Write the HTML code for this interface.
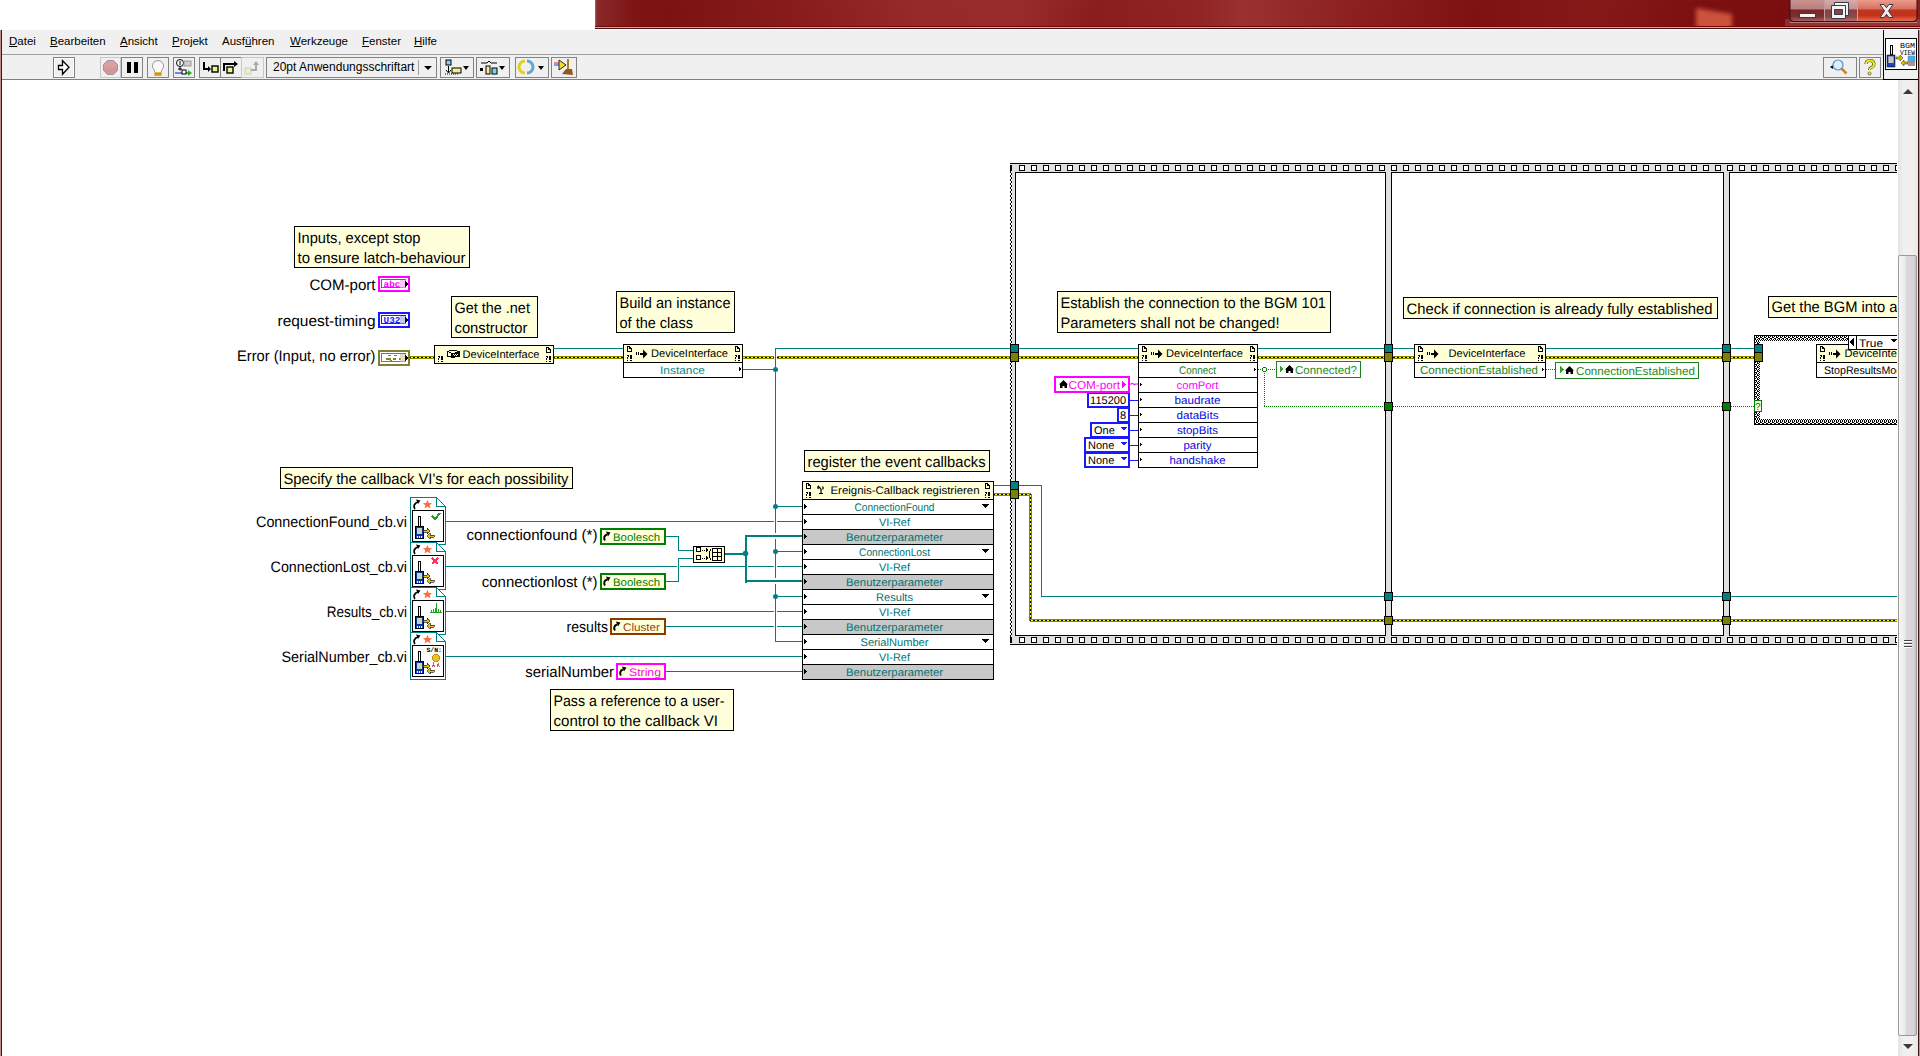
<!DOCTYPE html>
<html><head><meta charset="utf-8">
<style>
*{margin:0;padding:0;box-sizing:border-box}
html,body{width:1920px;height:1056px;overflow:hidden;background:#fff;font-family:"Liberation Sans",sans-serif}
.a{position:absolute}
#title{left:595px;top:0;width:1325px;height:29px;box-shadow:inset 2px 0 2px -1px rgba(255,200,200,.35);background:linear-gradient(90deg,#8a2a2a 0px,#7e1414 40px,#7c1212 70px,#881c1c 200px,#962a2a 320px,#982c2c 420px,#8a1e1e 500px,#902424 600px,#9a3030 650px,#8c2020 760px,#7e1212 880px,#861818 1000px,#7c1010 1100px,#7a0e0e 1190px,#8a2020 1325px)}
#menu{left:2px;top:30px;width:1916px;height:25px;background:#f0f0f0;border-bottom:1px solid #a0a0a0}
#tool{left:2px;top:55px;width:1916px;height:25px;background:#f0f0f0;border-bottom:1px solid #808080}
.mi{position:absolute;top:35px;font-size:11.5px;color:#000;white-space:pre}
.mi u{text-decoration:underline}
.tb{position:absolute;top:57px;height:21px;border:1px solid #828282;background:#f0f0f0}
</style></head><body>
<div class="a" id="title">
 <svg class="a" style="left:1095px;top:0" width="50" height="29"><defs><filter id="bl" x="-20%" y="-20%" width="140%" height="140%"><feGaussianBlur stdDeviation="2"/></filter></defs><path d="M6 8L42 14V29H6z" fill="#d45a40" opacity=".9" filter="url(#bl)"/></svg>
 <div class="a" style="left:0;top:26px;width:1325px;height:1px;background:#760606"></div>
 <div class="a" style="left:0;top:27px;width:1325px;height:1px;background:#d8a8a8"></div>
 <div class="a" style="left:0;top:28px;width:1325px;height:1px;background:#4a1010"></div>
</div>
<!-- window buttons -->
<svg class="a" style="left:1785px;top:0" width="135" height="29">
<defs>
<linearGradient id="gmin" x1="0" y1="0" x2="0" y2="1"><stop offset="0" stop-color="#c89494"/><stop offset=".45" stop-color="#b88080"/><stop offset=".5" stop-color="#7a2626"/><stop offset=".8" stop-color="#7c3030"/><stop offset="1" stop-color="#a86060"/></linearGradient>
<linearGradient id="gmax" x1="0" y1="0" x2="0" y2="1"><stop offset="0" stop-color="#d8b0b0"/><stop offset=".45" stop-color="#c49090"/><stop offset=".5" stop-color="#8a4040"/><stop offset=".8" stop-color="#8a4a4a"/><stop offset="1" stop-color="#b07070"/></linearGradient>
<linearGradient id="gcls" x1="0" y1="0" x2="0" y2="1"><stop offset="0" stop-color="#f0a090"/><stop offset=".45" stop-color="#d87060"/><stop offset=".5" stop-color="#b83a20"/><stop offset=".75" stop-color="#c83018"/><stop offset="1" stop-color="#e07050"/></linearGradient>
</defs>
<rect x="0" y="19" width="135" height="7" fill="#a04848" opacity=".55"/>
<path d="M4.5 -1V17.5a5 5 0 0 0 5 5H127.5a5 5 0 0 0 5-5V-1" fill="#3a1010"/>
<path d="M5.5 -1V17a4 4 0 0 0 4 4H39V-1z" fill="url(#gmin)"/>
<rect x="40" y="-1" width="32" height="22" fill="url(#gmax)"/>
<path d="M73 -1V21H127.5a4 4 0 0 0 4-4V-1z" fill="url(#gcls)"/>
<rect x="39" y="0" width="1" height="21" fill="#e8c0c0" opacity=".8"/>
<rect x="72" y="0" width="1" height="21" fill="#f0c8c0" opacity=".8"/>
<path d="M5 22.5H132" stroke="#d8a0a0" stroke-width="1" opacity=".7"/>
<rect x="14.5" y="13.5" width="16" height="4" fill="#f4f4f4" stroke="#3a3a4a" stroke-width="1"/>
<path d="M49.5 2.5h14v13h-3v-10h-11z" fill="#f4f4f4" stroke="#3a3a4a" stroke-width="1"/>
<path d="M46.5 5.5h14v13h-14zM49.5 9.5v5h8v-5z" fill="#f4f4f4" fill-rule="evenodd" stroke="#3a3a4a" stroke-width="1"/>
<path d="M95 4.5h4l2.5 3.2 2.5-3.2h4l-4.5 6.5 4.5 6.5h-4l-2.5-3.2-2.5 3.2h-4l4.5-6.5z" fill="#ececec" stroke="#3a3a4a" stroke-width="1"/>
</svg>
<div class="a" style="left:0;top:30px;width:1px;height:1026px;background:#c09090"></div>
<div class="a" style="left:1px;top:30px;width:1px;height:1026px;background:#3a1515"></div>
<div class="a" style="left:1918px;top:30px;width:1px;height:1026px;background:#3a1515"></div>
<div class="a" style="left:1919px;top:30px;width:1px;height:1026px;background:#c09090"></div>
<div class="a" id="menu"></div>
<div class="a" id="tool"></div>
<div class="mi" style="left:9px"><u>D</u>atei</div>
<div class="mi" style="left:50px"><u>B</u>earbeiten</div>
<div class="mi" style="left:120px"><u>A</u>nsicht</div>
<div class="mi" style="left:172px"><u>P</u>rojekt</div>
<div class="mi" style="left:222px">Ausf<u>ü</u>hren</div>
<div class="mi" style="left:290px"><u>W</u>erkzeuge</div>
<div class="mi" style="left:362px"><u>F</u>enster</div>
<div class="mi" style="left:414px"><u>H</u>ilfe</div>
<div class="tb" style="left:53px;width:22px;box-shadow:inset 1px 1px 0 #fff,inset -1px -1px 0 #fff"><svg class="a" style="left:0;top:0" width="20" height="19"><path d="M4.5 7.5H8.5V2.5L15 9.3L8.5 16.3V11.5H4.5Z" fill="#fff" stroke="#000" stroke-width="1.3" stroke-linejoin="miter"/></svg></div>
<div class="tb" style="left:100px;width:21px;border-color:#c8c8c8"><svg class="a" style="left:0;top:0" width="19" height="19"><path d="M6.5 2.5h6l4 4v6l-4 4h-6l-4-4v-6z" fill="#d9a0a0" stroke="#999" stroke-width="1"/><path d="M3 9.5h13v3l-4 4h-5l-4-4z" fill="#c89090" opacity=".5"/></svg></div>
<div class="tb" style="left:121px;width:22px"><div class="a" style="left:5px;top:4px;width:4px;height:11px;background:#000"></div><div class="a" style="left:12px;top:4px;width:4px;height:11px;background:#000"></div></div>
<div class="tb" style="left:147px;width:22px"><svg class="a" style="left:0;top:0" width="20" height="19"><path d="M10 2.5a5.5 5.5 0 0 1 3.5 9.8v2.2h-7v-2.2A5.5 5.5 0 0 1 10 2.5z" fill="#fafafa" stroke="#999" stroke-width="1"/><rect x="6.5" y="14" width="7" height="4" fill="#e8c040"/><path d="M6.5 15.5h7M6.5 17h7" stroke="#a08020" stroke-width=".8"/></svg></div>
<div class="tb" style="left:173px;width:22px"><svg class="a" style="left:0;top:0" width="20" height="19"><circle cx="6" cy="5" r="3.5" fill="#fff" stroke="#000"/><path d="M6 3v4M6 8.5v4M4 11h4" stroke="#000"/><rect x="10" y="3" width="7" height="5" fill="#ccc" stroke="#999"/><path d="M1 15h15" stroke="#2040e0" stroke-width="1.2"/><rect x="8" y="12" width="4" height="4" fill="#fff" stroke="#000"/><path d="M14 12l4 3-4 3z" fill="#20b020"/></svg></div>
<div class="tb" style="left:199px;width:22px"><svg class="a" style="left:0;top:0" width="20" height="19"><path d="M4 4v7h5" fill="none" stroke="#000" stroke-width="2"/><path d="M8 8l3 3-3 3z" fill="#000"/><rect x="12" y="8" width="6" height="6" fill="#f0f090" stroke="#000" stroke-width="1.4"/></svg></div>
<div class="tb" style="left:220px;width:22px"><svg class="a" style="left:0;top:0" width="20" height="19"><path d="M3 13V6h11" fill="none" stroke="#000" stroke-width="2"/><path d="M13 3l4 3-4 3z" fill="#000"/><rect x="6" y="9" width="6" height="6" fill="#f0f090" stroke="#000" stroke-width="1.4"/></svg></div>
<div class="tb" style="left:241px;width:23px;border-color:#c8c8c8"><svg class="a" style="left:0;top:0" width="21" height="19"><rect x="3" y="10" width="6" height="6" fill="#f0f0c0" stroke="#ccc"/><path d="M9 12h5V6" fill="none" stroke="#aaa" stroke-width="2"/><path d="M11 7l3-4 3 4z" fill="#aaa"/></svg></div>
<div class="tb" style="left:266px;width:171px;background:#f0f0f0"><div class="a" style="left:6px;top:2px;font-size:12px;color:#000;white-space:pre">20pt Anwendungsschriftart</div><div class="a" style="left:151px;top:2px;width:1px;height:15px;background:#a0a0a0"></div><div class="a" style="left:157px;top:8px;width:0;height:0;border-left:4px solid transparent;border-right:4px solid transparent;border-top:4px solid #000"></div></div>
<div class="tb" style="left:440px;width:34px"><svg class="a" style="left:0;top:0" width="32" height="19"><rect x="5" y="2" width="5" height="5" fill="#80d0f0" stroke="#000"/><path d="M7.5 8v6M5 12l2.5 3 2.5-3" fill="none" stroke="#000"/><path d="M4 16h14" stroke="#000" stroke-dasharray="1 1"/><rect x="11" y="10" width="9" height="5" fill="#f0f090" stroke="#000"/><path d="M22 8h6l-3 4z" fill="#000"/></svg></div>
<div class="tb" style="left:476px;width:34px"><svg class="a" style="left:0;top:0" width="32" height="19"><path d="M4 5h6l2-2 2 2h6" fill="none" stroke="#000"/><rect x="3" y="10" width="3" height="3" fill="#000"/><rect x="9" y="8" width="4" height="8" fill="#f0f090" stroke="#000"/><rect x="15" y="10" width="5" height="6" fill="#80d0f0" stroke="#000"/><path d="M22 8h6l-3 4z" fill="#000"/></svg></div>
<div class="tb" style="left:515px;width:34px"><svg class="a" style="left:0;top:0" width="32" height="19"><path d="M9 3a6 6 0 0 0 0 12" fill="none" stroke="#e0d020" stroke-width="3"/><path d="M11 3a6 6 0 0 1 0 12" fill="none" stroke="#60a8d0" stroke-width="3"/><path d="M22 8h6l-3 4z" fill="#000"/></svg></div>
<div class="tb" style="left:551px;width:26px"><svg class="a" style="left:0;top:0" width="24" height="19"><path d="M2 5h6" stroke="#e02020" stroke-width="1"/><path d="M2 7h6" stroke="#2040e0" stroke-width="1"/><path d="M7 2l7 5-7 5z" fill="#f0e020" stroke="#000" stroke-width=".8"/><rect x="15" y="1" width="2" height="10" fill="#b08020"/><path d="M10 16l4-5h6l1 6z" fill="#8a5a20"/></svg></div>
<div class="tb" style="left:1823px;width:34px"><svg class="a" style="left:0;top:0" width="32" height="19"><path d="M6 9l3-2v4z" fill="#000"/><circle cx="14" cy="7" r="5" fill="#d8f0ff" stroke="#6090c0" stroke-width="1.2"/><path d="M17.5 10.5l5 5" stroke="#d08030" stroke-width="2.5"/></svg></div>
<div class="tb" style="left:1859px;width:22px"><svg class="a" style="left:0;top:0" width="20" height="19"><path d="M6 6a4 3.5 0 1 1 5 3.5c-1 .6-1.5 1.2-1.5 2.5" fill="none" stroke="#333" stroke-width="3"/><path d="M6 6a4 3.5 0 1 1 5 3.5c-1 .6-1.5 1.2-1.5 2.5" fill="none" stroke="#f0f000" stroke-width="2"/><circle cx="9.5" cy="15.5" r="1.6" fill="#f0f000" stroke="#333" stroke-width=".6"/></svg></div>

<div class="a" style="left:1883px;top:30px;width:35px;height:50px;background:#f0f0f0;border-left:1px solid #000;border-bottom:1px solid #000"></div>
<div class="a" style="left:1885px;top:38px;width:32px;height:32px;background:#fff;border:1px solid #000">
<svg class="a" style="left:0;top:0" width="30" height="30"><text x="29" y="9" font-family="Liberation Mono" font-size="7" text-anchor="end" textLength="15" lengthAdjust="spacingAndGlyphs">BGM</text><text x="29" y="16" font-family="Liberation Mono" font-size="7" text-anchor="end" textLength="15" lengthAdjust="spacingAndGlyphs">VIEW</text><rect x="4" y="6" width="3" height="10" fill="#000"/><rect x="5" y="7" width="1" height="8" fill="#fff"/><rect x="1.5" y="16.5" width="7" height="11" fill="#c8c8c8" stroke="#0a2a70" stroke-width="1.6"/><rect x="1.5" y="24" width="7" height="3" fill="#2040d0"/><path d="M10 18h4v-2l3 3-3 3v-2h-4z" fill="#f0b800" stroke="#222" stroke-width=".5"/><path d="M22 23h-4v-2l-3 3 3 3v-2h4z" fill="#f0b800" stroke="#222" stroke-width=".5"/><rect x="22" y="17" width="7" height="6" fill="#40b0e8" stroke="#888" stroke-width=".6"/><rect x="22" y="23" width="7" height="4" fill="#b09090"/></svg>
</div>

<div class="a" style="left:1898px;top:80px;width:20px;height:976px;background:linear-gradient(90deg,#e4e4e4,#f0f0f0 30%,#f0f0f0 70%,#e8e8e8)"></div>
<div class="a" style="left:1903px;top:89px;width:0;height:0;border-left:5px solid transparent;border-right:5px solid transparent;border-bottom:5px solid #3a3a3a"></div>
<div class="a" style="left:1898px;top:255px;width:19px;height:781px;border:1px solid #9a9a9a;border-radius:2px;background:linear-gradient(90deg,#f6f6f6 0%,#eaeaea 35%,#d8d8dc 45%,#d6d6da 85%,#c4c4c8 100%)"></div>
<div class="a" style="left:1904px;top:640px;width:8px;height:1px;background:#444;box-shadow:0 3px 0 #444,0 6px 0 #444,0 1px 0 #fff,0 4px 0 #fff,0 7px 0 #fff"></div>
<div class="a" style="left:1903px;top:1044px;width:0;height:0;border-left:5px solid transparent;border-right:5px solid transparent;border-top:5px solid #3a3a3a"></div>

<!-- DIAGRAM --><svg class="a" style="left:0;top:0" width="1897" height="1056" viewBox="0 0 1897 1056" shape-rendering="crispEdges" text-rendering="geometricPrecision"><defs>
<pattern id="errh" width="4" height="1" patternUnits="userSpaceOnUse" x="1"><rect width="2" height="1" fill="#000"/><rect x="2" width="2" height="1" fill="#ffff00"/></pattern>
<pattern id="errv" width="1" height="4" patternUnits="userSpaceOnUse" y="1"><rect width="1" height="2" fill="#000"/><rect y="2" width="1" height="2" fill="#ffff00"/></pattern>
<pattern id="zig" width="2" height="4" patternUnits="userSpaceOnUse" x="1010" y="203"><rect width="2" height="4" fill="#fff"/><rect width="1" height="2" fill="#000"/><rect x="1" y="2" width="1" height="2" fill="#000"/></pattern>
<pattern id="chkh" width="4" height="5" patternUnits="userSpaceOnUse" x="1770" y="336"><rect width="4" height="5" fill="#fff"/><rect x="0" y="0" width="1" height="1" fill="#000"/><rect x="2" y="0" width="1" height="1" fill="#000"/><rect x="2" y="1" width="2" height="1" fill="#000"/><rect x="0" y="2" width="2" height="1" fill="#000"/><rect x="1" y="3" width="1" height="1" fill="#000"/><rect x="3" y="3" width="1" height="1" fill="#000"/><rect x="0" y="4" width="1" height="1" fill="#000"/><rect x="2" y="4" width="1" height="1" fill="#000"/></pattern>
<pattern id="chkv" width="5" height="4" patternUnits="userSpaceOnUse" x="1755" y="342"><rect width="5" height="4" fill="#fff"/><rect x="0" y="0" width="1" height="1" fill="#000"/><rect x="0" y="2" width="1" height="1" fill="#000"/><rect x="1" y="2" width="1" height="2" fill="#000"/><rect x="2" y="0" width="1" height="2" fill="#000"/><rect x="3" y="1" width="1" height="1" fill="#000"/><rect x="3" y="3" width="1" height="1" fill="#000"/><rect x="4" y="0" width="1" height="1" fill="#000"/><rect x="4" y="2" width="1" height="1" fill="#000"/></pattern>
</defs><g><rect x="294" y="226" width="176" height="42" fill="#000"/>
<rect x="295" y="227" width="174" height="40" fill="#ffffdc"/>
<text x="297.5" y="243" font-size="15.2" fill="#000" font-family="Liberation Sans" textLength="123" lengthAdjust="spacingAndGlyphs">Inputs, except stop</text>
<text x="297.5" y="263" font-size="15.2" fill="#000" font-family="Liberation Sans" textLength="168" lengthAdjust="spacingAndGlyphs">to ensure latch-behaviour</text>
<text x="375.5" y="290" font-size="15.2" fill="#000" font-family="Liberation Sans" text-anchor="end" textLength="66" lengthAdjust="spacingAndGlyphs">COM-port</text>
<text x="375.5" y="325.5" font-size="15.2" fill="#000" font-family="Liberation Sans" text-anchor="end" textLength="98" lengthAdjust="spacingAndGlyphs">request-timing</text>
<text x="375.5" y="360.5" font-size="15.2" fill="#000" font-family="Liberation Sans" text-anchor="end" textLength="138.5" lengthAdjust="spacingAndGlyphs">Error (Input, no error)</text>
<rect x="378" y="276" width="32" height="16" fill="#ff00ff"/>
<rect x="380" y="278" width="28" height="12" fill="#fff"/>
<rect x="381.5" y="279.5" width="24" height="8" fill="none" stroke="#ff00ff" stroke-width="1"/>
<text x="392" y="287" font-size="9" fill="#ff00ff" font-family="Liberation Mono" text-anchor="middle" textLength="17" lengthAdjust="spacingAndGlyphs" font-weight="bold">abc</text>
<rect x="400" y="280" width="6" height="8" fill="#ffa0ff" opacity=".6"/>
<path d="M405 281l3 3-3 3z" fill="#000"/>
<rect x="378" y="312" width="32" height="16" fill="#1a1aff"/>
<rect x="380" y="314" width="28" height="12" fill="#fff"/>
<rect x="381.5" y="315.5" width="24" height="8" fill="none" stroke="#1a1aff" stroke-width="1"/>
<text x="392" y="323" font-size="9" fill="#1a1aff" font-family="Liberation Mono" text-anchor="middle" textLength="17" lengthAdjust="spacingAndGlyphs" font-weight="bold">U32</text>
<rect x="400" y="316" width="6" height="8" fill="#a0a0ff" opacity=".6"/>
<path d="M405 317l3 3-3 3z" fill="#000"/>
<rect x="378" y="350" width="32" height="16" fill="#808030"/>
<rect x="380" y="352" width="28" height="12" fill="#fff"/>
<rect x="381.5" y="353.5" width="24" height="8" fill="none" stroke="#808030" stroke-width="1"/>
<rect x="388" y="355" width="3" height="1" fill="#808030"/>
<rect x="394" y="355" width="3" height="1" fill="#808030"/>
<rect x="386" y="358" width="5" height="2" fill="#808030"/>
<rect x="393" y="358" width="3" height="2" fill="#808030"/>
<rect x="399" y="358" width="2" height="2" fill="#808030"/>
<rect x="390" y="360" width="2" height="1" fill="#808030"/>
<rect x="400" y="354" width="6" height="8" fill="#c8c8a0" opacity=".6"/>
<path d="M405 355l3 3-3 3z" fill="#000"/>
<rect x="410" y="356" width="24" height="3" fill="#8a8a00"/>
<rect x="410" y="357" width="24" height="1" fill="url(#errh)"/>
<rect x="434" y="345" width="120" height="19" fill="#000"/>
<rect x="435" y="346" width="118" height="17" fill="#ffffd8"/>
<rect x="449" y="350" width="1" height="1" fill="#000"/>
<rect x="450" y="350" width="1" height="1" fill="#000"/>
<rect x="451" y="350" width="1" height="1" fill="#000"/>
<rect x="452" y="350" width="1" height="1" fill="#000"/>
<rect x="453" y="350" width="1" height="1" fill="#000"/>
<rect x="454" y="350" width="1" height="1" fill="#000"/>
<rect x="455" y="350" width="1" height="1" fill="#000"/>
<rect x="456" y="350" width="1" height="1" fill="#000"/>
<rect x="447" y="351" width="1" height="1" fill="#000"/>
<rect x="448" y="351" width="1" height="1" fill="#000"/>
<rect x="457" y="351" width="1" height="1" fill="#000"/>
<rect x="458" y="351" width="1" height="1" fill="#000"/>
<rect x="459" y="351" width="1" height="1" fill="#000"/>
<rect x="447" y="352" width="1" height="1" fill="#000"/>
<rect x="449" y="352" width="1" height="1" fill="#000"/>
<rect x="450" y="352" width="1" height="1" fill="#000"/>
<rect x="455" y="352" width="1" height="1" fill="#000"/>
<rect x="456" y="352" width="1" height="1" fill="#000"/>
<rect x="457" y="352" width="1" height="1" fill="#000"/>
<rect x="458" y="352" width="1" height="1" fill="#000"/>
<rect x="459" y="352" width="1" height="1" fill="#000"/>
<rect x="447" y="353" width="1" height="1" fill="#000"/>
<rect x="451" y="353" width="1" height="1" fill="#000"/>
<rect x="452" y="353" width="1" height="1" fill="#000"/>
<rect x="453" y="353" width="1" height="1" fill="#000"/>
<rect x="454" y="353" width="1" height="1" fill="#000"/>
<rect x="455" y="353" width="1" height="1" fill="#000"/>
<rect x="456" y="353" width="1" height="1" fill="#000"/>
<rect x="457" y="353" width="1" height="1" fill="#000"/>
<rect x="458" y="353" width="1" height="1" fill="#000"/>
<rect x="459" y="353" width="1" height="1" fill="#000"/>
<rect x="447" y="354" width="1" height="1" fill="#000"/>
<rect x="451" y="354" width="1" height="1" fill="#000"/>
<rect x="452" y="354" width="1" height="1" fill="#000"/>
<rect x="454" y="354" width="1" height="1" fill="#000"/>
<rect x="456" y="354" width="1" height="1" fill="#000"/>
<rect x="458" y="354" width="1" height="1" fill="#000"/>
<rect x="459" y="354" width="1" height="1" fill="#000"/>
<rect x="447" y="355" width="1" height="1" fill="#000"/>
<rect x="451" y="355" width="1" height="1" fill="#000"/>
<rect x="452" y="355" width="1" height="1" fill="#000"/>
<rect x="453" y="355" width="1" height="1" fill="#000"/>
<rect x="455" y="355" width="1" height="1" fill="#000"/>
<rect x="457" y="355" width="1" height="1" fill="#000"/>
<rect x="458" y="355" width="1" height="1" fill="#000"/>
<rect x="459" y="355" width="1" height="1" fill="#000"/>
<rect x="447" y="356" width="1" height="1" fill="#000"/>
<rect x="448" y="356" width="1" height="1" fill="#000"/>
<rect x="449" y="356" width="1" height="1" fill="#000"/>
<rect x="450" y="356" width="1" height="1" fill="#000"/>
<rect x="451" y="356" width="1" height="1" fill="#000"/>
<rect x="452" y="356" width="1" height="1" fill="#000"/>
<rect x="453" y="356" width="1" height="1" fill="#000"/>
<rect x="454" y="356" width="1" height="1" fill="#000"/>
<rect x="455" y="356" width="1" height="1" fill="#000"/>
<rect x="456" y="356" width="1" height="1" fill="#000"/>
<rect x="457" y="356" width="1" height="1" fill="#000"/>
<rect x="458" y="356" width="1" height="1" fill="#000"/>
<rect x="459" y="356" width="1" height="1" fill="#000"/>
<rect x="451" y="357" width="1" height="1" fill="#000"/>
<rect x="452" y="357" width="1" height="1" fill="#000"/>
<rect x="453" y="357" width="1" height="1" fill="#000"/>
<rect x="454" y="357" width="1" height="1" fill="#000"/>
<text x="462.5" y="358" font-size="11" fill="#000" font-family="Liberation Sans" textLength="77" lengthAdjust="spacingAndGlyphs">DeviceInterface</text>
<path d="M546 347h3v1h1v1h1v4h-5zM547 348v4h3v-3h-1v-1z" fill="#000" fill-rule="evenodd"/>
<rect x="548" y="348" width="1" height="2" fill="#000"/>
<rect x="549" y="349" width="1" height="1" fill="#000"/>
<rect x="438" y="356" width="1" height="1" fill="#000"/>
<rect x="439" y="356" width="1" height="1" fill="#000"/>
<rect x="439" y="357" width="1" height="1" fill="#000"/>
<rect x="438" y="358" width="1" height="1" fill="#000"/>
<rect x="438" y="359" width="1" height="1" fill="#000"/>
<rect x="438" y="361" width="1" height="1" fill="#000"/>
<rect x="441" y="356" width="2" height="4" fill="#000"/>
<rect x="441" y="361" width="2" height="1" fill="#000"/>
<rect x="546" y="356" width="1" height="1" fill="#000"/>
<rect x="547" y="356" width="1" height="1" fill="#000"/>
<rect x="547" y="357" width="1" height="1" fill="#000"/>
<rect x="546" y="358" width="1" height="1" fill="#000"/>
<rect x="546" y="359" width="1" height="1" fill="#000"/>
<rect x="546" y="361" width="1" height="1" fill="#000"/>
<rect x="549" y="356" width="2" height="4" fill="#000"/>
<rect x="549" y="361" width="2" height="1" fill="#000"/>
<rect x="451" y="296" width="87" height="42" fill="#000"/>
<rect x="452" y="297" width="85" height="40" fill="#ffffdc"/>
<text x="454.5" y="313" font-size="15.2" fill="#000" font-family="Liberation Sans" textLength="75.4" lengthAdjust="spacingAndGlyphs">Get the .net</text>
<text x="454.5" y="333" font-size="15.2" fill="#000" font-family="Liberation Sans" textLength="73" lengthAdjust="spacingAndGlyphs">constructor</text>
<rect x="553" y="348" width="70" height="1" fill="#008080"/>
<rect x="554" y="356" width="69" height="3" fill="#8a8a00"/>
<rect x="554" y="357" width="69" height="1" fill="url(#errh)"/>
<rect x="616" y="291" width="119" height="42" fill="#000"/>
<rect x="617" y="292" width="117" height="40" fill="#ffffdc"/>
<text x="619.5" y="308" font-size="15.2" fill="#000" font-family="Liberation Sans" textLength="111" lengthAdjust="spacingAndGlyphs">Build an instance</text>
<text x="619.5" y="328" font-size="15.2" fill="#000" font-family="Liberation Sans" textLength="73.4" lengthAdjust="spacingAndGlyphs">of the class</text>
<rect x="623" y="344" width="120" height="34" fill="#000"/>
<rect x="624" y="345" width="118" height="32" fill="#fff"/>
<rect x="624" y="345" width="118" height="17" fill="#ffffd8"/>
<rect x="623" y="362" width="120" height="1" fill="#000"/>
<path d="M627 346h3v1h1v1h1v4h-5zM628 347v4h3v-3h-1v-1z" fill="#000" fill-rule="evenodd"/>
<rect x="629" y="347" width="1" height="2" fill="#000"/>
<rect x="630" y="348" width="1" height="1" fill="#000"/>
<rect x="627" y="355" width="1" height="1" fill="#000"/>
<rect x="628" y="355" width="1" height="1" fill="#000"/>
<rect x="628" y="356" width="1" height="1" fill="#000"/>
<rect x="627" y="357" width="1" height="1" fill="#000"/>
<rect x="627" y="358" width="1" height="1" fill="#000"/>
<rect x="627" y="360" width="1" height="1" fill="#000"/>
<rect x="630" y="355" width="2" height="4" fill="#000"/>
<rect x="630" y="360" width="2" height="1" fill="#000"/>
<path d="M735 346h3v1h1v1h1v4h-5zM736 347v4h3v-3h-1v-1z" fill="#000" fill-rule="evenodd"/>
<rect x="737" y="347" width="1" height="2" fill="#000"/>
<rect x="738" y="348" width="1" height="1" fill="#000"/>
<rect x="735" y="355" width="1" height="1" fill="#000"/>
<rect x="736" y="355" width="1" height="1" fill="#000"/>
<rect x="736" y="356" width="1" height="1" fill="#000"/>
<rect x="735" y="357" width="1" height="1" fill="#000"/>
<rect x="735" y="358" width="1" height="1" fill="#000"/>
<rect x="735" y="360" width="1" height="1" fill="#000"/>
<rect x="738" y="355" width="2" height="4" fill="#000"/>
<rect x="738" y="360" width="2" height="1" fill="#000"/>
<rect x="636" y="352" width="1" height="3" fill="#000"/>
<rect x="638" y="352" width="1" height="3" fill="#000"/>
<rect x="640" y="353" width="4" height="2" fill="#000"/>
<path d="M643 349.5l4.5 4.5-4.5 4.5z" fill="#000" shape-rendering="geometricPrecision"/>
<text x="651" y="357" font-size="11" fill="#000" font-family="Liberation Sans" textLength="77" lengthAdjust="spacingAndGlyphs">DeviceInterface</text>
<text x="682.5" y="373.5" font-size="11" fill="#0a8888" font-family="Liberation Sans" text-anchor="middle" textLength="45" lengthAdjust="spacingAndGlyphs">Instance</text>
<path d="M739 367l2 2-2 2z" fill="#000"/>
<rect x="743" y="369" width="33" height="1" fill="#008080"/>
<rect x="775" y="348" width="1" height="294" fill="#008080"/>
<rect x="775" y="348" width="236" height="1" fill="#008080"/>
<circle cx="775.5" cy="369.5" r="2.5" fill="#008080" shape-rendering="geometricPrecision"/>
<rect x="743" y="356" width="31" height="3" fill="#8a8a00"/>
<rect x="743" y="357" width="31" height="1" fill="url(#errh)"/>
<rect x="777" y="356" width="233" height="3" fill="#8a8a00"/>
<rect x="777" y="357" width="233" height="1" fill="url(#errh)"/>
<rect x="280" y="467" width="293" height="22" fill="#000"/>
<rect x="281" y="468" width="291" height="20" fill="#ffffdc"/>
<text x="283.5" y="484" font-size="15.2" fill="#000" font-family="Liberation Sans" textLength="285" lengthAdjust="spacingAndGlyphs">Specify the callback VI's for each possibility</text>
<text x="407" y="527" font-size="15.2" fill="#000" font-family="Liberation Sans" text-anchor="end" textLength="151" lengthAdjust="spacingAndGlyphs">ConnectionFound_cb.vi</text>
<text x="407" y="572" font-size="15.2" fill="#000" font-family="Liberation Sans" text-anchor="end" textLength="136.4" lengthAdjust="spacingAndGlyphs">ConnectionLost_cb.vi</text>
<text x="407" y="617" font-size="15.2" fill="#000" font-family="Liberation Sans" text-anchor="end" textLength="80.3" lengthAdjust="spacingAndGlyphs">Results_cb.vi</text>
<text x="407" y="662" font-size="15.2" fill="#000" font-family="Liberation Sans" text-anchor="end" textLength="125.5" lengthAdjust="spacingAndGlyphs">SerialNumber_cb.vi</text>
<rect x="446" y="521" width="328" height="1" fill="#008080"/>
<rect x="777" y="521" width="25" height="1" fill="#008080"/>
<rect x="446" y="566" width="231" height="1" fill="#008080"/>
<rect x="680" y="566" width="64.5" height="1" fill="#008080"/>
<rect x="747.5" y="566" width="26.5" height="1" fill="#008080"/>
<rect x="777" y="566" width="25" height="1" fill="#008080"/>
<rect x="446" y="611" width="328" height="1" fill="#008080"/>
<rect x="777" y="611" width="25" height="1" fill="#008080"/>
<rect x="446" y="656" width="356" height="1" fill="#008080"/>
<path d="M410.5 497.5H436.5L445.5 506.5V544.5H410.5Z" fill="#fff" stroke="#008080" stroke-width="1"/>
<path d="M436.5 497.5V506.5H445.5" fill="none" stroke="#008080" stroke-width="1"/>
<path d="M415 509c-2-2-1-6 3-7" fill="none" stroke="#000" stroke-width="1.8" shape-rendering="geometricPrecision"/><path d="M416 499.5l4.5 1-2.5 3.5z" fill="#000" shape-rendering="geometricPrecision"/>
<path d="M427.5 500l1.3 3 3.3.2-2.5 2 .9 3.2-3-1.8-3 1.8.9-3.2-2.5-2 3.3-.2z" fill="#ff6a40" shape-rendering="geometricPrecision"/>
<rect x="412" y="510" width="32" height="32" fill="#000"/>
<rect x="413" y="511" width="30" height="30" fill="#fff"/>
<rect x="412" y="510" width="32" height="1" fill="#000"/>
<rect x="412" y="541" width="32" height="1" fill="#000"/>
<rect x="418" y="516" width="3" height="11" fill="#000"/>
<rect x="419" y="517" width="1" height="9" fill="#fff"/>
<rect x="415" y="526" width="9" height="13" fill="#000"/>
<rect x="416" y="527" width="7" height="9" fill="#0a3a80"/>
<rect x="417" y="528" width="5" height="6" fill="#d0d0d0"/>
<rect x="416" y="536" width="7" height="2" fill="#2040e0"/>
<rect x="417" y="536" width="1" height="2" fill="#fff"/>
<rect x="419" y="536" width="1" height="2" fill="#fff"/>
<rect x="421" y="536" width="1" height="2" fill="#fff"/>
<path d="M423 530h4v-2l3 3-3 3v-2h-4z" fill="#f0c000" stroke="#000" stroke-width=".6"/>
<path d="M434 535h-4v-2l-3 3 3 3v-2h4z" fill="#f0c000" stroke="#000" stroke-width=".6"/>
<path d="M432 516l3 3 5-6" fill="none" stroke="#20a020" stroke-width="2"/>
<path d="M410.5 542.5H436.5L445.5 551.5V589.5H410.5Z" fill="#fff" stroke="#008080" stroke-width="1"/>
<path d="M436.5 542.5V551.5H445.5" fill="none" stroke="#008080" stroke-width="1"/>
<path d="M415 554c-2-2-1-6 3-7" fill="none" stroke="#000" stroke-width="1.8" shape-rendering="geometricPrecision"/><path d="M416 544.5l4.5 1-2.5 3.5z" fill="#000" shape-rendering="geometricPrecision"/>
<path d="M427.5 545l1.3 3 3.3.2-2.5 2 .9 3.2-3-1.8-3 1.8.9-3.2-2.5-2 3.3-.2z" fill="#ff6a40" shape-rendering="geometricPrecision"/>
<rect x="412" y="555" width="32" height="32" fill="#000"/>
<rect x="413" y="556" width="30" height="30" fill="#fff"/>
<rect x="412" y="555" width="32" height="1" fill="#000"/>
<rect x="412" y="586" width="32" height="1" fill="#000"/>
<rect x="418" y="561" width="3" height="11" fill="#000"/>
<rect x="419" y="562" width="1" height="9" fill="#fff"/>
<rect x="415" y="571" width="9" height="13" fill="#000"/>
<rect x="416" y="572" width="7" height="9" fill="#0a3a80"/>
<rect x="417" y="573" width="5" height="6" fill="#d0d0d0"/>
<rect x="416" y="581" width="7" height="2" fill="#2040e0"/>
<rect x="417" y="581" width="1" height="2" fill="#fff"/>
<rect x="419" y="581" width="1" height="2" fill="#fff"/>
<rect x="421" y="581" width="1" height="2" fill="#fff"/>
<path d="M423 575h4v-2l3 3-3 3v-2h-4z" fill="#f0c000" stroke="#000" stroke-width=".6"/>
<path d="M434 580h-4v-2l-3 3 3 3v-2h4z" fill="#f0c000" stroke="#000" stroke-width=".6"/>
<path d="M432 558l6 6M438 558l-6 6" fill="none" stroke="#ff3060" stroke-width="2"/>
<path d="M410.5 587.5H436.5L445.5 596.5V634.5H410.5Z" fill="#fff" stroke="#008080" stroke-width="1"/>
<path d="M436.5 587.5V596.5H445.5" fill="none" stroke="#008080" stroke-width="1"/>
<path d="M415 599c-2-2-1-6 3-7" fill="none" stroke="#000" stroke-width="1.8" shape-rendering="geometricPrecision"/><path d="M416 589.5l4.5 1-2.5 3.5z" fill="#000" shape-rendering="geometricPrecision"/>
<path d="M427.5 590l1.3 3 3.3.2-2.5 2 .9 3.2-3-1.8-3 1.8.9-3.2-2.5-2 3.3-.2z" fill="#ff6a40" shape-rendering="geometricPrecision"/>
<rect x="412" y="600" width="32" height="32" fill="#000"/>
<rect x="413" y="601" width="30" height="30" fill="#fff"/>
<rect x="412" y="600" width="32" height="1" fill="#000"/>
<rect x="412" y="631" width="32" height="1" fill="#000"/>
<rect x="418" y="606" width="3" height="11" fill="#000"/>
<rect x="419" y="607" width="1" height="9" fill="#fff"/>
<rect x="415" y="616" width="9" height="13" fill="#000"/>
<rect x="416" y="617" width="7" height="9" fill="#0a3a80"/>
<rect x="417" y="618" width="5" height="6" fill="#d0d0d0"/>
<rect x="416" y="626" width="7" height="2" fill="#2040e0"/>
<rect x="417" y="626" width="1" height="2" fill="#fff"/>
<rect x="419" y="626" width="1" height="2" fill="#fff"/>
<rect x="421" y="626" width="1" height="2" fill="#fff"/>
<path d="M423 620h4v-2l3 3-3 3v-2h-4z" fill="#f0c000" stroke="#000" stroke-width=".6"/>
<path d="M434 625h-4v-2l-3 3 3 3v-2h4z" fill="#f0c000" stroke="#000" stroke-width=".6"/>
<path d="M430 612h12M431 612v-2M433 612v-3M435 612v-4M436 612v-9M438 612v-3M440 612v-2" fill="none" stroke="#20a020" stroke-width="1"/>
<path d="M410.5 632.5H436.5L445.5 641.5V679.5H410.5Z" fill="#fff" stroke="#008080" stroke-width="1"/>
<path d="M436.5 632.5V641.5H445.5" fill="none" stroke="#008080" stroke-width="1"/>
<path d="M415 644c-2-2-1-6 3-7" fill="none" stroke="#000" stroke-width="1.8" shape-rendering="geometricPrecision"/><path d="M416 634.5l4.5 1-2.5 3.5z" fill="#000" shape-rendering="geometricPrecision"/>
<path d="M427.5 635l1.3 3 3.3.2-2.5 2 .9 3.2-3-1.8-3 1.8.9-3.2-2.5-2 3.3-.2z" fill="#ff6a40" shape-rendering="geometricPrecision"/>
<rect x="412" y="645" width="32" height="32" fill="#000"/>
<rect x="413" y="646" width="30" height="30" fill="#fff"/>
<rect x="412" y="645" width="32" height="1" fill="#000"/>
<rect x="412" y="676" width="32" height="1" fill="#000"/>
<rect x="418" y="651" width="3" height="11" fill="#000"/>
<rect x="419" y="652" width="1" height="9" fill="#fff"/>
<rect x="415" y="661" width="9" height="13" fill="#000"/>
<rect x="416" y="662" width="7" height="9" fill="#0a3a80"/>
<rect x="417" y="663" width="5" height="6" fill="#d0d0d0"/>
<rect x="416" y="671" width="7" height="2" fill="#2040e0"/>
<rect x="417" y="671" width="1" height="2" fill="#fff"/>
<rect x="419" y="671" width="1" height="2" fill="#fff"/>
<rect x="421" y="671" width="1" height="2" fill="#fff"/>
<path d="M423 665h4v-2l3 3-3 3v-2h-4z" fill="#f0c000" stroke="#000" stroke-width=".6"/>
<path d="M434 670h-4v-2l-3 3 3 3v-2h4z" fill="#f0c000" stroke="#000" stroke-width=".6"/>
<text x="442" y="652" font-size="6.5" fill="#000" font-family="Liberation Mono" text-anchor="end" font-weight="bold">S/N:</text>
<path d="M434 661l-2 6 2-1 1 2zM438 661l2 6-2-1-1 2z" fill="#e05070"/><circle cx="436" cy="658" r="3.6" fill="#f0c020" stroke="#b08000" stroke-width=".8"/>
<text x="597.5" y="539.5" font-size="15.2" fill="#000" font-family="Liberation Sans" text-anchor="end" textLength="131" lengthAdjust="spacingAndGlyphs">connectionfound (*)</text>
<text x="597.5" y="586.5" font-size="15.2" fill="#000" font-family="Liberation Sans" text-anchor="end" textLength="115.7" lengthAdjust="spacingAndGlyphs">connectionlost (*)</text>
<text x="608" y="632" font-size="15.2" fill="#000" font-family="Liberation Sans" text-anchor="end" textLength="41.5" lengthAdjust="spacingAndGlyphs">results</text>
<text x="614" y="677" font-size="15.2" fill="#000" font-family="Liberation Sans" text-anchor="end" textLength="88.7" lengthAdjust="spacingAndGlyphs">serialNumber</text>
<rect x="600" y="528" width="66" height="17" fill="#008000"/>
<rect x="602" y="530" width="62" height="13" fill="#ffffdc"/>
<path d="M605 540.5c-1.5-2-1-5 2-6" fill="none" stroke="#000" stroke-width="2" shape-rendering="geometricPrecision"/><path d="M606 531.5l4.5 1-2.5 4z" fill="#000" shape-rendering="geometricPrecision"/>
<text x="613" y="540.5" font-size="11" fill="#008000" font-family="Liberation Sans" textLength="47" lengthAdjust="spacingAndGlyphs">Boolesch</text>
<rect x="600" y="573" width="66" height="17" fill="#008000"/>
<rect x="602" y="575" width="62" height="13" fill="#ffffdc"/>
<path d="M605 585.5c-1.5-2-1-5 2-6" fill="none" stroke="#000" stroke-width="2" shape-rendering="geometricPrecision"/><path d="M606 576.5l4.5 1-2.5 4z" fill="#000" shape-rendering="geometricPrecision"/>
<text x="613" y="585.5" font-size="11" fill="#008000" font-family="Liberation Sans" textLength="47" lengthAdjust="spacingAndGlyphs">Boolesch</text>
<rect x="610" y="618" width="56" height="17" fill="#8b3a00"/>
<rect x="612" y="620" width="52" height="13" fill="#ffffdc"/>
<path d="M615 630.5c-1.5-2-1-5 2-6" fill="none" stroke="#000" stroke-width="2" shape-rendering="geometricPrecision"/><path d="M616 621.5l4.5 1-2.5 4z" fill="#000" shape-rendering="geometricPrecision"/>
<text x="623" y="630.5" font-size="11" fill="#9a4010" font-family="Liberation Sans" textLength="37" lengthAdjust="spacingAndGlyphs">Cluster</text>
<rect x="616" y="663" width="50" height="17" fill="#ff00ff"/>
<rect x="618" y="665" width="46" height="13" fill="#ffffdc"/>
<path d="M621 675.5c-1.5-2-1-5 2-6" fill="none" stroke="#000" stroke-width="2" shape-rendering="geometricPrecision"/><path d="M622 666.5l4.5 1-2.5 4z" fill="#000" shape-rendering="geometricPrecision"/>
<text x="629" y="675.5" font-size="11" fill="#ff00ff" font-family="Liberation Sans" textLength="32" lengthAdjust="spacingAndGlyphs">String</text>
<rect x="666" y="536" width="13" height="1" fill="#008080"/>
<rect x="678" y="536" width="1" height="15" fill="#008080"/>
<rect x="678" y="550" width="15" height="1" fill="#008080"/>
<rect x="666" y="581" width="13" height="1" fill="#008080"/>
<rect x="678" y="558" width="1" height="24" fill="#008080"/>
<rect x="678" y="558" width="15" height="1" fill="#008080"/>
<rect x="693" y="546" width="32" height="17" fill="#000"/>
<rect x="694" y="547" width="30" height="15" fill="#ffffd0"/>
<rect x="696.5" y="547.5" width="4" height="4" fill="#fff" stroke="#000"/>
<rect x="702" y="550" width="1" height="1" fill="#000"/>
<rect x="704" y="550" width="1" height="1" fill="#000"/>
<path d="M706 548l2 2-2 2z" fill="#000"/>
<rect x="696.5" y="555.5" width="4" height="4" fill="#fff" stroke="#000"/>
<rect x="702" y="558" width="1" height="1" fill="#000"/>
<rect x="704" y="558" width="1" height="1" fill="#000"/>
<path d="M706 556l2 2-2 2z" fill="#000"/>
<path d="M711 549c-2 2-2 9 0 11" fill="none" stroke="#000"/>
<rect x="712.5" y="548.5" width="9" height="12" fill="#ffffd0" stroke="#000"/><path d="M717 549v11M713 552.5h8M713 556.5h8" stroke="#000"/>
<rect x="725" y="553" width="21" height="2" fill="#008080"/>
<rect x="745" y="535" width="2" height="48" fill="#008080"/>
<rect x="745" y="535" width="57" height="2" fill="#008080"/>
<rect x="745" y="580" width="57" height="2" fill="#008080"/>
<circle cx="745.5" cy="553.5" r="2.8" fill="#008080" shape-rendering="geometricPrecision"/>
<rect x="774" y="533" width="3" height="6" fill="#fff"/>
<rect x="774" y="578" width="3" height="6" fill="#fff"/>
<rect x="775" y="348" width="1" height="8" fill="#008080"/>
<rect x="775" y="506" width="27" height="1" fill="#008080"/>
<rect x="775" y="551" width="27" height="1" fill="#008080"/>
<rect x="775" y="596" width="27" height="1" fill="#008080"/>
<rect x="775" y="641" width="27" height="1" fill="#008080"/>
<circle cx="775.5" cy="506.5" r="2.5" fill="#008080" shape-rendering="geometricPrecision"/>
<circle cx="775.5" cy="551.5" r="2.5" fill="#008080" shape-rendering="geometricPrecision"/>
<circle cx="775.5" cy="596.5" r="2.5" fill="#008080" shape-rendering="geometricPrecision"/>
<rect x="745" y="535" width="2" height="2" fill="#008080"/>
<rect x="745" y="580" width="2" height="2" fill="#008080"/>
<rect x="745" y="535" width="57" height="2" fill="#008080"/>
<rect x="745" y="580" width="57" height="2" fill="#008080"/>
<rect x="666" y="626" width="108" height="1" fill="#008080"/>
<rect x="777" y="626" width="25" height="1" fill="#008080"/>
<rect x="666" y="671" width="136" height="1" fill="#008080"/>
<rect x="550" y="689" width="184" height="42" fill="#000"/>
<rect x="551" y="690" width="182" height="40" fill="#ffffdc"/>
<text x="553.5" y="706" font-size="15.2" fill="#000" font-family="Liberation Sans" textLength="171" lengthAdjust="spacingAndGlyphs">Pass a reference to a user-</text>
<text x="553.5" y="726" font-size="15.2" fill="#000" font-family="Liberation Sans" textLength="164.5" lengthAdjust="spacingAndGlyphs">control to the callback VI</text>
<rect x="804" y="450" width="186" height="22" fill="#000"/>
<rect x="805" y="451" width="184" height="20" fill="#ffffdc"/>
<text x="807.5" y="467" font-size="15.2" fill="#000" font-family="Liberation Sans" textLength="178" lengthAdjust="spacingAndGlyphs">register the event callbacks</text>
<rect x="802" y="481" width="192" height="199" fill="#000"/>
<rect x="803" y="482" width="190" height="197" fill="#fff"/>
<rect x="803" y="482" width="190" height="17" fill="#ffffd8"/>
<rect x="802" y="499" width="192" height="1" fill="#000"/>
<text x="894.5" y="511" font-size="11" fill="#007474" font-family="Liberation Sans" text-anchor="middle" textLength="80" lengthAdjust="spacingAndGlyphs">ConnectionFound</text>
<path d="M804 503l3 3.5-3 3.5z" fill="#000"/>
<path d="M982 504h7l-3.5 4z" fill="#000"/>
<rect x="802" y="514" width="192" height="1" fill="#000"/>
<text x="894.5" y="526" font-size="11" fill="#007474" font-family="Liberation Sans" text-anchor="middle" textLength="31" lengthAdjust="spacingAndGlyphs">VI-Ref</text>
<path d="M804 518l3 3.5-3 3.5z" fill="#000"/>
<rect x="802" y="529" width="192" height="1" fill="#000"/>
<rect x="803" y="530" width="190" height="14" fill="#c8c8c8"/>
<text x="894.5" y="541" font-size="11" fill="#007474" font-family="Liberation Sans" text-anchor="middle" textLength="97" lengthAdjust="spacingAndGlyphs">Benutzerparameter</text>
<path d="M804 533l3 3.5-3 3.5z" fill="#000"/>
<rect x="802" y="544" width="192" height="1" fill="#000"/>
<text x="894.5" y="556" font-size="11" fill="#007474" font-family="Liberation Sans" text-anchor="middle" textLength="71" lengthAdjust="spacingAndGlyphs">ConnectionLost</text>
<path d="M804 548l3 3.5-3 3.5z" fill="#000"/>
<path d="M982 549h7l-3.5 4z" fill="#000"/>
<rect x="802" y="559" width="192" height="1" fill="#000"/>
<text x="894.5" y="571" font-size="11" fill="#007474" font-family="Liberation Sans" text-anchor="middle" textLength="31" lengthAdjust="spacingAndGlyphs">VI-Ref</text>
<path d="M804 563l3 3.5-3 3.5z" fill="#000"/>
<rect x="802" y="574" width="192" height="1" fill="#000"/>
<rect x="803" y="575" width="190" height="14" fill="#c8c8c8"/>
<text x="894.5" y="586" font-size="11" fill="#007474" font-family="Liberation Sans" text-anchor="middle" textLength="97" lengthAdjust="spacingAndGlyphs">Benutzerparameter</text>
<path d="M804 578l3 3.5-3 3.5z" fill="#000"/>
<rect x="802" y="589" width="192" height="1" fill="#000"/>
<text x="894.5" y="601" font-size="11" fill="#007474" font-family="Liberation Sans" text-anchor="middle" textLength="37" lengthAdjust="spacingAndGlyphs">Results</text>
<path d="M804 593l3 3.5-3 3.5z" fill="#000"/>
<path d="M982 594h7l-3.5 4z" fill="#000"/>
<rect x="802" y="604" width="192" height="1" fill="#000"/>
<text x="894.5" y="616" font-size="11" fill="#007474" font-family="Liberation Sans" text-anchor="middle" textLength="31" lengthAdjust="spacingAndGlyphs">VI-Ref</text>
<path d="M804 608l3 3.5-3 3.5z" fill="#000"/>
<rect x="802" y="619" width="192" height="1" fill="#000"/>
<rect x="803" y="620" width="190" height="14" fill="#c8c8c8"/>
<text x="894.5" y="631" font-size="11" fill="#007474" font-family="Liberation Sans" text-anchor="middle" textLength="97" lengthAdjust="spacingAndGlyphs">Benutzerparameter</text>
<path d="M804 623l3 3.5-3 3.5z" fill="#000"/>
<rect x="802" y="634" width="192" height="1" fill="#000"/>
<text x="894.5" y="646" font-size="11" fill="#007474" font-family="Liberation Sans" text-anchor="middle" textLength="68" lengthAdjust="spacingAndGlyphs">SerialNumber</text>
<path d="M804 638l3 3.5-3 3.5z" fill="#000"/>
<path d="M982 639h7l-3.5 4z" fill="#000"/>
<rect x="802" y="649" width="192" height="1" fill="#000"/>
<text x="894.5" y="661" font-size="11" fill="#007474" font-family="Liberation Sans" text-anchor="middle" textLength="31" lengthAdjust="spacingAndGlyphs">VI-Ref</text>
<path d="M804 653l3 3.5-3 3.5z" fill="#000"/>
<rect x="802" y="664" width="192" height="1" fill="#000"/>
<rect x="803" y="665" width="190" height="14" fill="#c8c8c8"/>
<text x="894.5" y="676" font-size="11" fill="#007474" font-family="Liberation Sans" text-anchor="middle" textLength="97" lengthAdjust="spacingAndGlyphs">Benutzerparameter</text>
<path d="M804 668l3 3.5-3 3.5z" fill="#000"/>
<rect x="802" y="679" width="192" height="1" fill="#000"/>
<path d="M806 483h3v1h1v1h1v4h-5zM807 484v4h3v-3h-1v-1z" fill="#000" fill-rule="evenodd"/>
<rect x="808" y="484" width="1" height="2" fill="#000"/>
<rect x="809" y="485" width="1" height="1" fill="#000"/>
<rect x="806" y="492" width="1" height="1" fill="#000"/>
<rect x="807" y="492" width="1" height="1" fill="#000"/>
<rect x="807" y="493" width="1" height="1" fill="#000"/>
<rect x="806" y="494" width="1" height="1" fill="#000"/>
<rect x="806" y="495" width="1" height="1" fill="#000"/>
<rect x="806" y="497" width="1" height="1" fill="#000"/>
<rect x="809" y="492" width="2" height="4" fill="#000"/>
<rect x="809" y="497" width="2" height="1" fill="#000"/>
<path d="M985 483h3v1h1v1h1v4h-5zM986 484v4h3v-3h-1v-1z" fill="#000" fill-rule="evenodd"/>
<rect x="987" y="484" width="1" height="2" fill="#000"/>
<rect x="988" y="485" width="1" height="1" fill="#000"/>
<rect x="985" y="492" width="1" height="1" fill="#000"/>
<rect x="986" y="492" width="1" height="1" fill="#000"/>
<rect x="986" y="493" width="1" height="1" fill="#000"/>
<rect x="985" y="494" width="1" height="1" fill="#000"/>
<rect x="985" y="495" width="1" height="1" fill="#000"/>
<rect x="985" y="497" width="1" height="1" fill="#000"/>
<rect x="988" y="492" width="2" height="4" fill="#000"/>
<rect x="988" y="497" width="2" height="1" fill="#000"/>
<path d="M818 486l3 3M818.5 489a2 2 0 0 1 0-3M822.5 486.5a2 2 0 0 1 0 3M821 489v4M819 493.5h4" fill="none" stroke="#000" stroke-width="1.2" shape-rendering="geometricPrecision"/>
<text x="830.5" y="493.5" font-size="11" fill="#000" font-family="Liberation Sans" textLength="149" lengthAdjust="spacingAndGlyphs">Ereignis-Callback registrieren</text>
<rect x="994" y="485" width="17" height="1" fill="#008080"/>
<rect x="994" y="493" width="17" height="3" fill="#8a8a00"/>
<rect x="994" y="494" width="17" height="1" fill="url(#errh)"/>
<rect x="1010" y="163" width="888" height="482" fill="#e0e0e0"/>
<rect x="1010" y="163" width="888" height="1" fill="#000"/>
<rect x="1010" y="644" width="888" height="1" fill="#000"/>
<rect x="1015" y="172" width="371" height="464" fill="#000"/>
<rect x="1016" y="173" width="369" height="462" fill="#fff"/>
<rect x="1391" y="172" width="333" height="464" fill="#000"/>
<rect x="1392" y="173" width="331" height="462" fill="#fff"/>
<rect x="1729" y="172" width="169" height="464" fill="#000"/>
<rect x="1730" y="173" width="168" height="462" fill="#fff"/>
<rect x="1019.5" y="165.5" width="5" height="5" fill="#fff" stroke="#000" stroke-width="1"/>
<rect x="1019.5" y="637.5" width="5" height="5" fill="#fff" stroke="#000" stroke-width="1"/>
<rect x="1031.5" y="165.5" width="5" height="5" fill="#fff" stroke="#000" stroke-width="1"/>
<rect x="1031.5" y="637.5" width="5" height="5" fill="#fff" stroke="#000" stroke-width="1"/>
<rect x="1043.5" y="165.5" width="5" height="5" fill="#fff" stroke="#000" stroke-width="1"/>
<rect x="1043.5" y="637.5" width="5" height="5" fill="#fff" stroke="#000" stroke-width="1"/>
<rect x="1055.5" y="165.5" width="5" height="5" fill="#fff" stroke="#000" stroke-width="1"/>
<rect x="1055.5" y="637.5" width="5" height="5" fill="#fff" stroke="#000" stroke-width="1"/>
<rect x="1067.5" y="165.5" width="5" height="5" fill="#fff" stroke="#000" stroke-width="1"/>
<rect x="1067.5" y="637.5" width="5" height="5" fill="#fff" stroke="#000" stroke-width="1"/>
<rect x="1079.5" y="165.5" width="5" height="5" fill="#fff" stroke="#000" stroke-width="1"/>
<rect x="1079.5" y="637.5" width="5" height="5" fill="#fff" stroke="#000" stroke-width="1"/>
<rect x="1091.5" y="165.5" width="5" height="5" fill="#fff" stroke="#000" stroke-width="1"/>
<rect x="1091.5" y="637.5" width="5" height="5" fill="#fff" stroke="#000" stroke-width="1"/>
<rect x="1103.5" y="165.5" width="5" height="5" fill="#fff" stroke="#000" stroke-width="1"/>
<rect x="1103.5" y="637.5" width="5" height="5" fill="#fff" stroke="#000" stroke-width="1"/>
<rect x="1115.5" y="165.5" width="5" height="5" fill="#fff" stroke="#000" stroke-width="1"/>
<rect x="1115.5" y="637.5" width="5" height="5" fill="#fff" stroke="#000" stroke-width="1"/>
<rect x="1127.5" y="165.5" width="5" height="5" fill="#fff" stroke="#000" stroke-width="1"/>
<rect x="1127.5" y="637.5" width="5" height="5" fill="#fff" stroke="#000" stroke-width="1"/>
<rect x="1139.5" y="165.5" width="5" height="5" fill="#fff" stroke="#000" stroke-width="1"/>
<rect x="1139.5" y="637.5" width="5" height="5" fill="#fff" stroke="#000" stroke-width="1"/>
<rect x="1151.5" y="165.5" width="5" height="5" fill="#fff" stroke="#000" stroke-width="1"/>
<rect x="1151.5" y="637.5" width="5" height="5" fill="#fff" stroke="#000" stroke-width="1"/>
<rect x="1163.5" y="165.5" width="5" height="5" fill="#fff" stroke="#000" stroke-width="1"/>
<rect x="1163.5" y="637.5" width="5" height="5" fill="#fff" stroke="#000" stroke-width="1"/>
<rect x="1175.5" y="165.5" width="5" height="5" fill="#fff" stroke="#000" stroke-width="1"/>
<rect x="1175.5" y="637.5" width="5" height="5" fill="#fff" stroke="#000" stroke-width="1"/>
<rect x="1187.5" y="165.5" width="5" height="5" fill="#fff" stroke="#000" stroke-width="1"/>
<rect x="1187.5" y="637.5" width="5" height="5" fill="#fff" stroke="#000" stroke-width="1"/>
<rect x="1199.5" y="165.5" width="5" height="5" fill="#fff" stroke="#000" stroke-width="1"/>
<rect x="1199.5" y="637.5" width="5" height="5" fill="#fff" stroke="#000" stroke-width="1"/>
<rect x="1211.5" y="165.5" width="5" height="5" fill="#fff" stroke="#000" stroke-width="1"/>
<rect x="1211.5" y="637.5" width="5" height="5" fill="#fff" stroke="#000" stroke-width="1"/>
<rect x="1223.5" y="165.5" width="5" height="5" fill="#fff" stroke="#000" stroke-width="1"/>
<rect x="1223.5" y="637.5" width="5" height="5" fill="#fff" stroke="#000" stroke-width="1"/>
<rect x="1235.5" y="165.5" width="5" height="5" fill="#fff" stroke="#000" stroke-width="1"/>
<rect x="1235.5" y="637.5" width="5" height="5" fill="#fff" stroke="#000" stroke-width="1"/>
<rect x="1247.5" y="165.5" width="5" height="5" fill="#fff" stroke="#000" stroke-width="1"/>
<rect x="1247.5" y="637.5" width="5" height="5" fill="#fff" stroke="#000" stroke-width="1"/>
<rect x="1259.5" y="165.5" width="5" height="5" fill="#fff" stroke="#000" stroke-width="1"/>
<rect x="1259.5" y="637.5" width="5" height="5" fill="#fff" stroke="#000" stroke-width="1"/>
<rect x="1271.5" y="165.5" width="5" height="5" fill="#fff" stroke="#000" stroke-width="1"/>
<rect x="1271.5" y="637.5" width="5" height="5" fill="#fff" stroke="#000" stroke-width="1"/>
<rect x="1283.5" y="165.5" width="5" height="5" fill="#fff" stroke="#000" stroke-width="1"/>
<rect x="1283.5" y="637.5" width="5" height="5" fill="#fff" stroke="#000" stroke-width="1"/>
<rect x="1295.5" y="165.5" width="5" height="5" fill="#fff" stroke="#000" stroke-width="1"/>
<rect x="1295.5" y="637.5" width="5" height="5" fill="#fff" stroke="#000" stroke-width="1"/>
<rect x="1307.5" y="165.5" width="5" height="5" fill="#fff" stroke="#000" stroke-width="1"/>
<rect x="1307.5" y="637.5" width="5" height="5" fill="#fff" stroke="#000" stroke-width="1"/>
<rect x="1319.5" y="165.5" width="5" height="5" fill="#fff" stroke="#000" stroke-width="1"/>
<rect x="1319.5" y="637.5" width="5" height="5" fill="#fff" stroke="#000" stroke-width="1"/>
<rect x="1331.5" y="165.5" width="5" height="5" fill="#fff" stroke="#000" stroke-width="1"/>
<rect x="1331.5" y="637.5" width="5" height="5" fill="#fff" stroke="#000" stroke-width="1"/>
<rect x="1343.5" y="165.5" width="5" height="5" fill="#fff" stroke="#000" stroke-width="1"/>
<rect x="1343.5" y="637.5" width="5" height="5" fill="#fff" stroke="#000" stroke-width="1"/>
<rect x="1355.5" y="165.5" width="5" height="5" fill="#fff" stroke="#000" stroke-width="1"/>
<rect x="1355.5" y="637.5" width="5" height="5" fill="#fff" stroke="#000" stroke-width="1"/>
<rect x="1367.5" y="165.5" width="5" height="5" fill="#fff" stroke="#000" stroke-width="1"/>
<rect x="1367.5" y="637.5" width="5" height="5" fill="#fff" stroke="#000" stroke-width="1"/>
<rect x="1379.5" y="165.5" width="5" height="5" fill="#fff" stroke="#000" stroke-width="1"/>
<rect x="1379.5" y="637.5" width="5" height="5" fill="#fff" stroke="#000" stroke-width="1"/>
<rect x="1391.5" y="165.5" width="5" height="5" fill="#fff" stroke="#000" stroke-width="1"/>
<rect x="1391.5" y="637.5" width="5" height="5" fill="#fff" stroke="#000" stroke-width="1"/>
<rect x="1403.5" y="165.5" width="5" height="5" fill="#fff" stroke="#000" stroke-width="1"/>
<rect x="1403.5" y="637.5" width="5" height="5" fill="#fff" stroke="#000" stroke-width="1"/>
<rect x="1415.5" y="165.5" width="5" height="5" fill="#fff" stroke="#000" stroke-width="1"/>
<rect x="1415.5" y="637.5" width="5" height="5" fill="#fff" stroke="#000" stroke-width="1"/>
<rect x="1427.5" y="165.5" width="5" height="5" fill="#fff" stroke="#000" stroke-width="1"/>
<rect x="1427.5" y="637.5" width="5" height="5" fill="#fff" stroke="#000" stroke-width="1"/>
<rect x="1439.5" y="165.5" width="5" height="5" fill="#fff" stroke="#000" stroke-width="1"/>
<rect x="1439.5" y="637.5" width="5" height="5" fill="#fff" stroke="#000" stroke-width="1"/>
<rect x="1451.5" y="165.5" width="5" height="5" fill="#fff" stroke="#000" stroke-width="1"/>
<rect x="1451.5" y="637.5" width="5" height="5" fill="#fff" stroke="#000" stroke-width="1"/>
<rect x="1463.5" y="165.5" width="5" height="5" fill="#fff" stroke="#000" stroke-width="1"/>
<rect x="1463.5" y="637.5" width="5" height="5" fill="#fff" stroke="#000" stroke-width="1"/>
<rect x="1475.5" y="165.5" width="5" height="5" fill="#fff" stroke="#000" stroke-width="1"/>
<rect x="1475.5" y="637.5" width="5" height="5" fill="#fff" stroke="#000" stroke-width="1"/>
<rect x="1487.5" y="165.5" width="5" height="5" fill="#fff" stroke="#000" stroke-width="1"/>
<rect x="1487.5" y="637.5" width="5" height="5" fill="#fff" stroke="#000" stroke-width="1"/>
<rect x="1499.5" y="165.5" width="5" height="5" fill="#fff" stroke="#000" stroke-width="1"/>
<rect x="1499.5" y="637.5" width="5" height="5" fill="#fff" stroke="#000" stroke-width="1"/>
<rect x="1511.5" y="165.5" width="5" height="5" fill="#fff" stroke="#000" stroke-width="1"/>
<rect x="1511.5" y="637.5" width="5" height="5" fill="#fff" stroke="#000" stroke-width="1"/>
<rect x="1523.5" y="165.5" width="5" height="5" fill="#fff" stroke="#000" stroke-width="1"/>
<rect x="1523.5" y="637.5" width="5" height="5" fill="#fff" stroke="#000" stroke-width="1"/>
<rect x="1535.5" y="165.5" width="5" height="5" fill="#fff" stroke="#000" stroke-width="1"/>
<rect x="1535.5" y="637.5" width="5" height="5" fill="#fff" stroke="#000" stroke-width="1"/>
<rect x="1547.5" y="165.5" width="5" height="5" fill="#fff" stroke="#000" stroke-width="1"/>
<rect x="1547.5" y="637.5" width="5" height="5" fill="#fff" stroke="#000" stroke-width="1"/>
<rect x="1559.5" y="165.5" width="5" height="5" fill="#fff" stroke="#000" stroke-width="1"/>
<rect x="1559.5" y="637.5" width="5" height="5" fill="#fff" stroke="#000" stroke-width="1"/>
<rect x="1571.5" y="165.5" width="5" height="5" fill="#fff" stroke="#000" stroke-width="1"/>
<rect x="1571.5" y="637.5" width="5" height="5" fill="#fff" stroke="#000" stroke-width="1"/>
<rect x="1583.5" y="165.5" width="5" height="5" fill="#fff" stroke="#000" stroke-width="1"/>
<rect x="1583.5" y="637.5" width="5" height="5" fill="#fff" stroke="#000" stroke-width="1"/>
<rect x="1595.5" y="165.5" width="5" height="5" fill="#fff" stroke="#000" stroke-width="1"/>
<rect x="1595.5" y="637.5" width="5" height="5" fill="#fff" stroke="#000" stroke-width="1"/>
<rect x="1607.5" y="165.5" width="5" height="5" fill="#fff" stroke="#000" stroke-width="1"/>
<rect x="1607.5" y="637.5" width="5" height="5" fill="#fff" stroke="#000" stroke-width="1"/>
<rect x="1619.5" y="165.5" width="5" height="5" fill="#fff" stroke="#000" stroke-width="1"/>
<rect x="1619.5" y="637.5" width="5" height="5" fill="#fff" stroke="#000" stroke-width="1"/>
<rect x="1631.5" y="165.5" width="5" height="5" fill="#fff" stroke="#000" stroke-width="1"/>
<rect x="1631.5" y="637.5" width="5" height="5" fill="#fff" stroke="#000" stroke-width="1"/>
<rect x="1643.5" y="165.5" width="5" height="5" fill="#fff" stroke="#000" stroke-width="1"/>
<rect x="1643.5" y="637.5" width="5" height="5" fill="#fff" stroke="#000" stroke-width="1"/>
<rect x="1655.5" y="165.5" width="5" height="5" fill="#fff" stroke="#000" stroke-width="1"/>
<rect x="1655.5" y="637.5" width="5" height="5" fill="#fff" stroke="#000" stroke-width="1"/>
<rect x="1667.5" y="165.5" width="5" height="5" fill="#fff" stroke="#000" stroke-width="1"/>
<rect x="1667.5" y="637.5" width="5" height="5" fill="#fff" stroke="#000" stroke-width="1"/>
<rect x="1679.5" y="165.5" width="5" height="5" fill="#fff" stroke="#000" stroke-width="1"/>
<rect x="1679.5" y="637.5" width="5" height="5" fill="#fff" stroke="#000" stroke-width="1"/>
<rect x="1691.5" y="165.5" width="5" height="5" fill="#fff" stroke="#000" stroke-width="1"/>
<rect x="1691.5" y="637.5" width="5" height="5" fill="#fff" stroke="#000" stroke-width="1"/>
<rect x="1703.5" y="165.5" width="5" height="5" fill="#fff" stroke="#000" stroke-width="1"/>
<rect x="1703.5" y="637.5" width="5" height="5" fill="#fff" stroke="#000" stroke-width="1"/>
<rect x="1715.5" y="165.5" width="5" height="5" fill="#fff" stroke="#000" stroke-width="1"/>
<rect x="1715.5" y="637.5" width="5" height="5" fill="#fff" stroke="#000" stroke-width="1"/>
<rect x="1727.5" y="165.5" width="5" height="5" fill="#fff" stroke="#000" stroke-width="1"/>
<rect x="1727.5" y="637.5" width="5" height="5" fill="#fff" stroke="#000" stroke-width="1"/>
<rect x="1739.5" y="165.5" width="5" height="5" fill="#fff" stroke="#000" stroke-width="1"/>
<rect x="1739.5" y="637.5" width="5" height="5" fill="#fff" stroke="#000" stroke-width="1"/>
<rect x="1751.5" y="165.5" width="5" height="5" fill="#fff" stroke="#000" stroke-width="1"/>
<rect x="1751.5" y="637.5" width="5" height="5" fill="#fff" stroke="#000" stroke-width="1"/>
<rect x="1763.5" y="165.5" width="5" height="5" fill="#fff" stroke="#000" stroke-width="1"/>
<rect x="1763.5" y="637.5" width="5" height="5" fill="#fff" stroke="#000" stroke-width="1"/>
<rect x="1775.5" y="165.5" width="5" height="5" fill="#fff" stroke="#000" stroke-width="1"/>
<rect x="1775.5" y="637.5" width="5" height="5" fill="#fff" stroke="#000" stroke-width="1"/>
<rect x="1787.5" y="165.5" width="5" height="5" fill="#fff" stroke="#000" stroke-width="1"/>
<rect x="1787.5" y="637.5" width="5" height="5" fill="#fff" stroke="#000" stroke-width="1"/>
<rect x="1799.5" y="165.5" width="5" height="5" fill="#fff" stroke="#000" stroke-width="1"/>
<rect x="1799.5" y="637.5" width="5" height="5" fill="#fff" stroke="#000" stroke-width="1"/>
<rect x="1811.5" y="165.5" width="5" height="5" fill="#fff" stroke="#000" stroke-width="1"/>
<rect x="1811.5" y="637.5" width="5" height="5" fill="#fff" stroke="#000" stroke-width="1"/>
<rect x="1823.5" y="165.5" width="5" height="5" fill="#fff" stroke="#000" stroke-width="1"/>
<rect x="1823.5" y="637.5" width="5" height="5" fill="#fff" stroke="#000" stroke-width="1"/>
<rect x="1835.5" y="165.5" width="5" height="5" fill="#fff" stroke="#000" stroke-width="1"/>
<rect x="1835.5" y="637.5" width="5" height="5" fill="#fff" stroke="#000" stroke-width="1"/>
<rect x="1847.5" y="165.5" width="5" height="5" fill="#fff" stroke="#000" stroke-width="1"/>
<rect x="1847.5" y="637.5" width="5" height="5" fill="#fff" stroke="#000" stroke-width="1"/>
<rect x="1859.5" y="165.5" width="5" height="5" fill="#fff" stroke="#000" stroke-width="1"/>
<rect x="1859.5" y="637.5" width="5" height="5" fill="#fff" stroke="#000" stroke-width="1"/>
<rect x="1871.5" y="165.5" width="5" height="5" fill="#fff" stroke="#000" stroke-width="1"/>
<rect x="1871.5" y="637.5" width="5" height="5" fill="#fff" stroke="#000" stroke-width="1"/>
<rect x="1883.5" y="165.5" width="5" height="5" fill="#fff" stroke="#000" stroke-width="1"/>
<rect x="1883.5" y="637.5" width="5" height="5" fill="#fff" stroke="#000" stroke-width="1"/>
<rect x="1895.5" y="165.5" width="5" height="5" fill="#fff" stroke="#000" stroke-width="1"/>
<rect x="1895.5" y="637.5" width="5" height="5" fill="#fff" stroke="#000" stroke-width="1"/>
<rect x="1010" y="165" width="2" height="6" fill="#000"/>
<rect x="1010" y="637" width="2" height="6" fill="#000"/>
<rect x="1010" y="171" width="2" height="466" fill="url(#zig)"/>
<rect x="1012" y="171" width="3" height="466" fill="#e0e0e0"/>
<rect x="1019" y="348" width="119" height="1" fill="#008080"/>
<rect x="1019" y="356" width="119" height="3" fill="#8a8a00"/>
<rect x="1019" y="357" width="119" height="1" fill="url(#errh)"/>
<rect x="1258" y="348" width="126" height="1" fill="#008080"/>
<rect x="1258" y="356" width="126" height="3" fill="#8a8a00"/>
<rect x="1258" y="357" width="126" height="1" fill="url(#errh)"/>
<rect x="1393" y="348" width="21" height="1" fill="#008080"/>
<rect x="1393" y="356" width="21" height="3" fill="#8a8a00"/>
<rect x="1393" y="357" width="21" height="1" fill="url(#errh)"/>
<rect x="1546" y="348" width="177" height="1" fill="#008080"/>
<rect x="1546" y="356" width="177" height="3" fill="#8a8a00"/>
<rect x="1546" y="357" width="177" height="1" fill="url(#errh)"/>
<rect x="1731" y="348" width="23" height="1" fill="#008080"/>
<rect x="1731" y="356" width="23" height="3" fill="#8a8a00"/>
<rect x="1731" y="357" width="23" height="1" fill="url(#errh)"/>
<rect x="1763" y="348" width="53" height="1" fill="#008080"/>
<rect x="1763" y="356" width="53" height="3" fill="#8a8a00"/>
<rect x="1763" y="357" width="53" height="1" fill="url(#errh)"/>
<rect x="1019" y="485" width="23" height="1" fill="#008080"/>
<rect x="1041" y="485" width="1" height="112" fill="#008080"/>
<rect x="1041" y="596" width="343" height="1" fill="#008080"/>
<rect x="1393" y="596" width="330" height="1" fill="#008080"/>
<rect x="1731" y="596" width="167" height="1" fill="#008080"/>
<rect x="1019" y="493" width="12" height="3" fill="#8a8a00"/>
<rect x="1019" y="494" width="12" height="1" fill="url(#errh)"/>
<rect x="1029" y="494" width="3" height="127" fill="#8a8a00"/>
<rect x="1030" y="494" width="1" height="127" fill="url(#errv)"/>
<rect x="1030" y="619" width="354" height="3" fill="#8a8a00"/>
<rect x="1030" y="620" width="354" height="1" fill="url(#errh)"/>
<rect x="1393" y="619" width="330" height="3" fill="#8a8a00"/>
<rect x="1393" y="620" width="330" height="1" fill="url(#errh)"/>
<rect x="1731" y="619" width="167" height="3" fill="#8a8a00"/>
<rect x="1731" y="620" width="167" height="1" fill="url(#errh)"/>
<rect x="1010" y="344" width="9" height="18" fill="#000"/>
<rect x="1011" y="345" width="7" height="7" fill="#008080"/>
<rect x="1011" y="353" width="7" height="8" fill="#808000"/>
<rect x="1010" y="481" width="9" height="18" fill="#000"/>
<rect x="1011" y="482" width="7" height="7" fill="#008080"/>
<rect x="1011" y="490" width="7" height="8" fill="#808000"/>
<rect x="1384" y="344" width="9" height="18" fill="#000"/>
<rect x="1385" y="345" width="7" height="7" fill="#008080"/>
<rect x="1385" y="353" width="7" height="8" fill="#808000"/>
<rect x="1384" y="402" width="9" height="9" fill="#000"/>
<rect x="1385" y="403" width="7" height="7" fill="#008000"/>
<rect x="1384" y="592" width="9" height="9" fill="#000"/>
<rect x="1385" y="593" width="7" height="7" fill="#008080"/>
<rect x="1384" y="616" width="9" height="9" fill="#000"/>
<rect x="1385" y="617" width="7" height="7" fill="#808000"/>
<rect x="1722" y="344" width="9" height="18" fill="#000"/>
<rect x="1723" y="345" width="7" height="7" fill="#008080"/>
<rect x="1723" y="353" width="7" height="8" fill="#808000"/>
<rect x="1722" y="402" width="9" height="9" fill="#000"/>
<rect x="1723" y="403" width="7" height="7" fill="#008000"/>
<rect x="1722" y="592" width="9" height="9" fill="#000"/>
<rect x="1723" y="593" width="7" height="7" fill="#008080"/>
<rect x="1722" y="616" width="9" height="9" fill="#000"/>
<rect x="1723" y="617" width="7" height="7" fill="#808000"/>
<rect x="1057" y="291" width="274" height="42" fill="#000"/>
<rect x="1058" y="292" width="272" height="40" fill="#ffffdc"/>
<text x="1060.5" y="308" font-size="15.2" fill="#000" font-family="Liberation Sans" textLength="265.5" lengthAdjust="spacingAndGlyphs">Establish the connection to the BGM 101</text>
<text x="1060.5" y="328" font-size="15.2" fill="#000" font-family="Liberation Sans" textLength="219" lengthAdjust="spacingAndGlyphs">Parameters shall not be changed!</text>
<rect x="1138" y="344" width="120" height="124" fill="#000"/>
<rect x="1139" y="345" width="118" height="122" fill="#fff"/>
<rect x="1139" y="345" width="118" height="17" fill="#ffffd8"/>
<path d="M1142 346h3v1h1v1h1v4h-5zM1143 347v4h3v-3h-1v-1z" fill="#000" fill-rule="evenodd"/>
<rect x="1144" y="347" width="1" height="2" fill="#000"/>
<rect x="1145" y="348" width="1" height="1" fill="#000"/>
<rect x="1142" y="355" width="1" height="1" fill="#000"/>
<rect x="1143" y="355" width="1" height="1" fill="#000"/>
<rect x="1143" y="356" width="1" height="1" fill="#000"/>
<rect x="1142" y="357" width="1" height="1" fill="#000"/>
<rect x="1142" y="358" width="1" height="1" fill="#000"/>
<rect x="1142" y="360" width="1" height="1" fill="#000"/>
<rect x="1145" y="355" width="2" height="4" fill="#000"/>
<rect x="1145" y="360" width="2" height="1" fill="#000"/>
<path d="M1250 346h3v1h1v1h1v4h-5zM1251 347v4h3v-3h-1v-1z" fill="#000" fill-rule="evenodd"/>
<rect x="1252" y="347" width="1" height="2" fill="#000"/>
<rect x="1253" y="348" width="1" height="1" fill="#000"/>
<rect x="1250" y="355" width="1" height="1" fill="#000"/>
<rect x="1251" y="355" width="1" height="1" fill="#000"/>
<rect x="1251" y="356" width="1" height="1" fill="#000"/>
<rect x="1250" y="357" width="1" height="1" fill="#000"/>
<rect x="1250" y="358" width="1" height="1" fill="#000"/>
<rect x="1250" y="360" width="1" height="1" fill="#000"/>
<rect x="1253" y="355" width="2" height="4" fill="#000"/>
<rect x="1253" y="360" width="2" height="1" fill="#000"/>
<rect x="1151" y="352" width="1" height="3" fill="#000"/>
<rect x="1153" y="352" width="1" height="3" fill="#000"/>
<rect x="1155" y="353" width="4" height="2" fill="#000"/>
<path d="M1158 349.5l4.5 4.5-4.5 4.5z" fill="#000" shape-rendering="geometricPrecision"/>
<text x="1166" y="357" font-size="11" fill="#000" font-family="Liberation Sans" textLength="77" lengthAdjust="spacingAndGlyphs">DeviceInterface</text>
<rect x="1138" y="362" width="120" height="1" fill="#000"/>
<text x="1197.5" y="374" font-size="11" fill="#1e7e1e" font-family="Liberation Sans" text-anchor="middle" textLength="37" lengthAdjust="spacingAndGlyphs">Connect</text>
<path d="M1254 367l2 2.5-2 2.5z" fill="#000"/>
<rect x="1138" y="377" width="120" height="1" fill="#000"/>
<text x="1197.5" y="389" font-size="11" fill="#ff00ff" font-family="Liberation Sans" text-anchor="middle" textLength="42" lengthAdjust="spacingAndGlyphs">comPort</text>
<path d="M1140 382l2 2.5-2 2.5z" fill="#000"/>
<rect x="1138" y="392" width="120" height="1" fill="#000"/>
<text x="1197.5" y="404" font-size="11" fill="#0808e0" font-family="Liberation Sans" text-anchor="middle" textLength="46" lengthAdjust="spacingAndGlyphs">baudrate</text>
<path d="M1140 397l2 2.5-2 2.5z" fill="#000"/>
<rect x="1138" y="407" width="120" height="1" fill="#000"/>
<text x="1197.5" y="419" font-size="11" fill="#0808e0" font-family="Liberation Sans" text-anchor="middle" textLength="42" lengthAdjust="spacingAndGlyphs">dataBits</text>
<path d="M1140 412l2 2.5-2 2.5z" fill="#000"/>
<rect x="1138" y="422" width="120" height="1" fill="#000"/>
<text x="1197.5" y="434" font-size="11" fill="#0808e0" font-family="Liberation Sans" text-anchor="middle" textLength="41" lengthAdjust="spacingAndGlyphs">stopBits</text>
<path d="M1140 427l2 2.5-2 2.5z" fill="#000"/>
<rect x="1138" y="437" width="120" height="1" fill="#000"/>
<text x="1197.5" y="449" font-size="11" fill="#0808e0" font-family="Liberation Sans" text-anchor="middle" textLength="28" lengthAdjust="spacingAndGlyphs">parity</text>
<path d="M1140 442l2 2.5-2 2.5z" fill="#000"/>
<rect x="1138" y="452" width="120" height="1" fill="#000"/>
<text x="1197.5" y="464" font-size="11" fill="#0808e0" font-family="Liberation Sans" text-anchor="middle" textLength="56" lengthAdjust="spacingAndGlyphs">handshake</text>
<path d="M1140 457l2 2.5-2 2.5z" fill="#000"/>
<rect x="1087" y="392" width="43" height="16" fill="#1a1aff"/>
<rect x="1089" y="394" width="39" height="12" fill="#fff"/>
<text x="1126" y="404" font-size="11" fill="#000" font-family="Liberation Sans" text-anchor="end">115200</text>
<rect x="1117" y="407" width="13" height="16" fill="#1a1aff"/>
<rect x="1119" y="409" width="9" height="12" fill="#fff"/>
<text x="1126" y="419" font-size="11" fill="#000" font-family="Liberation Sans" text-anchor="end">8</text>
<rect x="1090" y="422" width="40" height="16" fill="#1a1aff"/>
<rect x="1092" y="424" width="36" height="12" fill="#fff"/>
<text x="1094" y="434" font-size="11" fill="#000" font-family="Liberation Sans">One</text>
<path d="M1121 427h6l-3 4z" fill="#1a1aff"/>
<rect x="1084" y="437" width="46" height="16" fill="#1a1aff"/>
<rect x="1086" y="439" width="42" height="12" fill="#fff"/>
<text x="1088" y="449" font-size="11" fill="#000" font-family="Liberation Sans">None</text>
<path d="M1121 442h6l-3 4z" fill="#1a1aff"/>
<rect x="1084" y="452" width="46" height="16" fill="#1a1aff"/>
<rect x="1086" y="454" width="42" height="12" fill="#fff"/>
<text x="1088" y="464" font-size="11" fill="#000" font-family="Liberation Sans">None</text>
<path d="M1121 457h6l-3 4z" fill="#1a1aff"/>
<rect x="1054" y="376" width="76" height="17" fill="#ff00ff"/>
<rect x="1056" y="378" width="72" height="13" fill="#fff"/>
<path d="M1059 384.5L1063.5 380L1068 384.5H1067V388H1064.5V386H1062.5V388H1060V384.5z" fill="#000" shape-rendering="geometricPrecision"/>
<text x="1068.5" y="389" font-size="11.5" fill="#ff00ff" font-family="Liberation Sans" textLength="51.5" lengthAdjust="spacingAndGlyphs">COM-port</text>
<path d="M1122 381l4 3.5-4 3.5z" fill="#ff00ff"/>
<path d="M1130 384h1.5q1 -1.5 2 0t2 0h2.5" fill="none" stroke="#ff00ff" stroke-width="1.2" shape-rendering="geometricPrecision"/>
<rect x="1130" y="400" width="8" height="1" fill="#1a1aff"/>
<rect x="1130" y="415" width="8" height="1" fill="#1a1aff"/>
<rect x="1130" y="430" width="8" height="1" fill="#1a1aff"/>
<rect x="1130" y="445" width="8" height="1" fill="#1a1aff"/>
<rect x="1130" y="460" width="8" height="1" fill="#1a1aff"/>
<rect x="1258" y="369" width="1" height="1" fill="#008000"/>
<rect x="1260" y="369" width="1" height="1" fill="#008000"/>
<rect x="1262" y="369" width="1" height="1" fill="#008000"/>
<rect x="1264" y="369" width="1" height="1" fill="#008000"/>
<rect x="1266" y="369" width="1" height="1" fill="#008000"/>
<rect x="1268" y="369" width="1" height="1" fill="#008000"/>
<rect x="1270" y="369" width="1" height="1" fill="#008000"/>
<rect x="1272" y="369" width="1" height="1" fill="#008000"/>
<rect x="1274" y="369" width="1" height="1" fill="#008000"/>
<rect x="1264" y="369" width="1" height="1" fill="#008000"/>
<rect x="1264" y="371" width="1" height="1" fill="#008000"/>
<rect x="1264" y="373" width="1" height="1" fill="#008000"/>
<rect x="1264" y="375" width="1" height="1" fill="#008000"/>
<rect x="1264" y="377" width="1" height="1" fill="#008000"/>
<rect x="1264" y="379" width="1" height="1" fill="#008000"/>
<rect x="1264" y="381" width="1" height="1" fill="#008000"/>
<rect x="1264" y="383" width="1" height="1" fill="#008000"/>
<rect x="1264" y="385" width="1" height="1" fill="#008000"/>
<rect x="1264" y="387" width="1" height="1" fill="#008000"/>
<rect x="1264" y="389" width="1" height="1" fill="#008000"/>
<rect x="1264" y="391" width="1" height="1" fill="#008000"/>
<rect x="1264" y="393" width="1" height="1" fill="#008000"/>
<rect x="1264" y="395" width="1" height="1" fill="#008000"/>
<rect x="1264" y="397" width="1" height="1" fill="#008000"/>
<rect x="1264" y="399" width="1" height="1" fill="#008000"/>
<rect x="1264" y="401" width="1" height="1" fill="#008000"/>
<rect x="1264" y="403" width="1" height="1" fill="#008000"/>
<rect x="1264" y="405" width="1" height="1" fill="#008000"/>
<rect x="1264" y="406" width="1" height="1" fill="#008000"/>
<rect x="1266" y="406" width="1" height="1" fill="#008000"/>
<rect x="1268" y="406" width="1" height="1" fill="#008000"/>
<rect x="1270" y="406" width="1" height="1" fill="#008000"/>
<rect x="1272" y="406" width="1" height="1" fill="#008000"/>
<rect x="1274" y="406" width="1" height="1" fill="#008000"/>
<rect x="1276" y="406" width="1" height="1" fill="#008000"/>
<rect x="1278" y="406" width="1" height="1" fill="#008000"/>
<rect x="1280" y="406" width="1" height="1" fill="#008000"/>
<rect x="1282" y="406" width="1" height="1" fill="#008000"/>
<rect x="1284" y="406" width="1" height="1" fill="#008000"/>
<rect x="1286" y="406" width="1" height="1" fill="#008000"/>
<rect x="1288" y="406" width="1" height="1" fill="#008000"/>
<rect x="1290" y="406" width="1" height="1" fill="#008000"/>
<rect x="1292" y="406" width="1" height="1" fill="#008000"/>
<rect x="1294" y="406" width="1" height="1" fill="#008000"/>
<rect x="1296" y="406" width="1" height="1" fill="#008000"/>
<rect x="1298" y="406" width="1" height="1" fill="#008000"/>
<rect x="1300" y="406" width="1" height="1" fill="#008000"/>
<rect x="1302" y="406" width="1" height="1" fill="#008000"/>
<rect x="1304" y="406" width="1" height="1" fill="#008000"/>
<rect x="1306" y="406" width="1" height="1" fill="#008000"/>
<rect x="1308" y="406" width="1" height="1" fill="#008000"/>
<rect x="1310" y="406" width="1" height="1" fill="#008000"/>
<rect x="1312" y="406" width="1" height="1" fill="#008000"/>
<rect x="1314" y="406" width="1" height="1" fill="#008000"/>
<rect x="1316" y="406" width="1" height="1" fill="#008000"/>
<rect x="1318" y="406" width="1" height="1" fill="#008000"/>
<rect x="1320" y="406" width="1" height="1" fill="#008000"/>
<rect x="1322" y="406" width="1" height="1" fill="#008000"/>
<rect x="1324" y="406" width="1" height="1" fill="#008000"/>
<rect x="1326" y="406" width="1" height="1" fill="#008000"/>
<rect x="1328" y="406" width="1" height="1" fill="#008000"/>
<rect x="1330" y="406" width="1" height="1" fill="#008000"/>
<rect x="1332" y="406" width="1" height="1" fill="#008000"/>
<rect x="1334" y="406" width="1" height="1" fill="#008000"/>
<rect x="1336" y="406" width="1" height="1" fill="#008000"/>
<rect x="1338" y="406" width="1" height="1" fill="#008000"/>
<rect x="1340" y="406" width="1" height="1" fill="#008000"/>
<rect x="1342" y="406" width="1" height="1" fill="#008000"/>
<rect x="1344" y="406" width="1" height="1" fill="#008000"/>
<rect x="1346" y="406" width="1" height="1" fill="#008000"/>
<rect x="1348" y="406" width="1" height="1" fill="#008000"/>
<rect x="1350" y="406" width="1" height="1" fill="#008000"/>
<rect x="1352" y="406" width="1" height="1" fill="#008000"/>
<rect x="1354" y="406" width="1" height="1" fill="#008000"/>
<rect x="1356" y="406" width="1" height="1" fill="#008000"/>
<rect x="1358" y="406" width="1" height="1" fill="#008000"/>
<rect x="1360" y="406" width="1" height="1" fill="#008000"/>
<rect x="1362" y="406" width="1" height="1" fill="#008000"/>
<rect x="1364" y="406" width="1" height="1" fill="#008000"/>
<rect x="1366" y="406" width="1" height="1" fill="#008000"/>
<rect x="1368" y="406" width="1" height="1" fill="#008000"/>
<rect x="1370" y="406" width="1" height="1" fill="#008000"/>
<rect x="1372" y="406" width="1" height="1" fill="#008000"/>
<rect x="1374" y="406" width="1" height="1" fill="#008000"/>
<rect x="1376" y="406" width="1" height="1" fill="#008000"/>
<rect x="1378" y="406" width="1" height="1" fill="#008000"/>
<rect x="1380" y="406" width="1" height="1" fill="#008000"/>
<rect x="1382" y="406" width="1" height="1" fill="#008000"/>
<circle cx="1264.5" cy="369.5" r="2" fill="#fff" stroke="#008000" stroke-width="1"/>
<rect x="1276" y="361" width="85" height="17" fill="#208020"/>
<rect x="1277" y="362" width="83" height="15" fill="#fff"/>
<path d="M1280 366l4 3-4 3z" fill="#30a030"/>
<path d="M1285 369.5L1289.5 365L1294 369.5H1293V373H1290.5V371H1288.5V373H1286V369.5z" fill="#000" shape-rendering="geometricPrecision"/>
<text x="1295" y="374" font-size="11.5" fill="#1e8c1e" font-family="Liberation Sans" textLength="62" lengthAdjust="spacingAndGlyphs">Connected?</text>
<rect x="1403" y="297" width="315" height="22" fill="#000"/>
<rect x="1404" y="298" width="313" height="20" fill="#ffffdc"/>
<text x="1406.5" y="314" font-size="15.2" fill="#000" font-family="Liberation Sans" textLength="306" lengthAdjust="spacingAndGlyphs">Check if connection is already fully established</text>
<rect x="1414" y="344" width="132" height="34" fill="#000"/>
<rect x="1415" y="345" width="130" height="32" fill="#fff"/>
<rect x="1415" y="345" width="130" height="17" fill="#ffffd8"/>
<rect x="1414" y="362" width="132" height="1" fill="#000"/>
<path d="M1418 346h3v1h1v1h1v4h-5zM1419 347v4h3v-3h-1v-1z" fill="#000" fill-rule="evenodd"/>
<rect x="1420" y="347" width="1" height="2" fill="#000"/>
<rect x="1421" y="348" width="1" height="1" fill="#000"/>
<rect x="1418" y="355" width="1" height="1" fill="#000"/>
<rect x="1419" y="355" width="1" height="1" fill="#000"/>
<rect x="1419" y="356" width="1" height="1" fill="#000"/>
<rect x="1418" y="357" width="1" height="1" fill="#000"/>
<rect x="1418" y="358" width="1" height="1" fill="#000"/>
<rect x="1418" y="360" width="1" height="1" fill="#000"/>
<rect x="1421" y="355" width="2" height="4" fill="#000"/>
<rect x="1421" y="360" width="2" height="1" fill="#000"/>
<path d="M1538 346h3v1h1v1h1v4h-5zM1539 347v4h3v-3h-1v-1z" fill="#000" fill-rule="evenodd"/>
<rect x="1540" y="347" width="1" height="2" fill="#000"/>
<rect x="1541" y="348" width="1" height="1" fill="#000"/>
<rect x="1538" y="355" width="1" height="1" fill="#000"/>
<rect x="1539" y="355" width="1" height="1" fill="#000"/>
<rect x="1539" y="356" width="1" height="1" fill="#000"/>
<rect x="1538" y="357" width="1" height="1" fill="#000"/>
<rect x="1538" y="358" width="1" height="1" fill="#000"/>
<rect x="1538" y="360" width="1" height="1" fill="#000"/>
<rect x="1541" y="355" width="2" height="4" fill="#000"/>
<rect x="1541" y="360" width="2" height="1" fill="#000"/>
<rect x="1427" y="352" width="1" height="3" fill="#000"/>
<rect x="1429" y="352" width="1" height="3" fill="#000"/>
<rect x="1431" y="353" width="4" height="2" fill="#000"/>
<path d="M1434 349.5l4.5 4.5-4.5 4.5z" fill="#000" shape-rendering="geometricPrecision"/>
<text x="1448.5" y="357" font-size="11" fill="#000" font-family="Liberation Sans" textLength="77" lengthAdjust="spacingAndGlyphs">DeviceInterface</text>
<text x="1420" y="373.5" font-size="11.5" fill="#1a841a" font-family="Liberation Sans" textLength="118" lengthAdjust="spacingAndGlyphs">ConnectionEstablished</text>
<path d="M1542 367l2 2.5-2 2.5z" fill="#000"/>
<rect x="1546" y="369" width="1" height="1" fill="#008000"/>
<rect x="1548" y="369" width="1" height="1" fill="#008000"/>
<rect x="1550" y="369" width="1" height="1" fill="#008000"/>
<rect x="1552" y="369" width="1" height="1" fill="#008000"/>
<rect x="1554" y="369" width="1" height="1" fill="#008000"/>
<rect x="1555" y="362" width="144" height="17" fill="#208020"/>
<rect x="1556" y="363" width="142" height="15" fill="#fff"/>
<path d="M1560 366l4 3.5-4 3.5z" fill="#30a030"/>
<path d="M1565 370.5L1569.5 366L1574 370.5H1573V374H1570.5V372H1568.5V374H1566V370.5z" fill="#000" shape-rendering="geometricPrecision"/>
<text x="1576" y="375" font-size="11.5" fill="#1e8c1e" font-family="Liberation Sans" textLength="119" lengthAdjust="spacingAndGlyphs">ConnectionEstablished</text>
<rect x="1393" y="406" width="1" height="1" fill="#008000"/>
<rect x="1395" y="406" width="1" height="1" fill="#008000"/>
<rect x="1397" y="406" width="1" height="1" fill="#008000"/>
<rect x="1399" y="406" width="1" height="1" fill="#008000"/>
<rect x="1401" y="406" width="1" height="1" fill="#008000"/>
<rect x="1403" y="406" width="1" height="1" fill="#008000"/>
<rect x="1405" y="406" width="1" height="1" fill="#008000"/>
<rect x="1407" y="406" width="1" height="1" fill="#008000"/>
<rect x="1409" y="406" width="1" height="1" fill="#008000"/>
<rect x="1411" y="406" width="1" height="1" fill="#008000"/>
<rect x="1413" y="406" width="1" height="1" fill="#008000"/>
<rect x="1415" y="406" width="1" height="1" fill="#008000"/>
<rect x="1417" y="406" width="1" height="1" fill="#008000"/>
<rect x="1419" y="406" width="1" height="1" fill="#008000"/>
<rect x="1421" y="406" width="1" height="1" fill="#008000"/>
<rect x="1423" y="406" width="1" height="1" fill="#008000"/>
<rect x="1425" y="406" width="1" height="1" fill="#008000"/>
<rect x="1427" y="406" width="1" height="1" fill="#008000"/>
<rect x="1429" y="406" width="1" height="1" fill="#008000"/>
<rect x="1431" y="406" width="1" height="1" fill="#008000"/>
<rect x="1433" y="406" width="1" height="1" fill="#008000"/>
<rect x="1435" y="406" width="1" height="1" fill="#008000"/>
<rect x="1437" y="406" width="1" height="1" fill="#008000"/>
<rect x="1439" y="406" width="1" height="1" fill="#008000"/>
<rect x="1441" y="406" width="1" height="1" fill="#008000"/>
<rect x="1443" y="406" width="1" height="1" fill="#008000"/>
<rect x="1445" y="406" width="1" height="1" fill="#008000"/>
<rect x="1447" y="406" width="1" height="1" fill="#008000"/>
<rect x="1449" y="406" width="1" height="1" fill="#008000"/>
<rect x="1451" y="406" width="1" height="1" fill="#008000"/>
<rect x="1453" y="406" width="1" height="1" fill="#008000"/>
<rect x="1455" y="406" width="1" height="1" fill="#008000"/>
<rect x="1457" y="406" width="1" height="1" fill="#008000"/>
<rect x="1459" y="406" width="1" height="1" fill="#008000"/>
<rect x="1461" y="406" width="1" height="1" fill="#008000"/>
<rect x="1463" y="406" width="1" height="1" fill="#008000"/>
<rect x="1465" y="406" width="1" height="1" fill="#008000"/>
<rect x="1467" y="406" width="1" height="1" fill="#008000"/>
<rect x="1469" y="406" width="1" height="1" fill="#008000"/>
<rect x="1471" y="406" width="1" height="1" fill="#008000"/>
<rect x="1473" y="406" width="1" height="1" fill="#008000"/>
<rect x="1475" y="406" width="1" height="1" fill="#008000"/>
<rect x="1477" y="406" width="1" height="1" fill="#008000"/>
<rect x="1479" y="406" width="1" height="1" fill="#008000"/>
<rect x="1481" y="406" width="1" height="1" fill="#008000"/>
<rect x="1483" y="406" width="1" height="1" fill="#008000"/>
<rect x="1485" y="406" width="1" height="1" fill="#008000"/>
<rect x="1487" y="406" width="1" height="1" fill="#008000"/>
<rect x="1489" y="406" width="1" height="1" fill="#008000"/>
<rect x="1491" y="406" width="1" height="1" fill="#008000"/>
<rect x="1493" y="406" width="1" height="1" fill="#008000"/>
<rect x="1495" y="406" width="1" height="1" fill="#008000"/>
<rect x="1497" y="406" width="1" height="1" fill="#008000"/>
<rect x="1499" y="406" width="1" height="1" fill="#008000"/>
<rect x="1501" y="406" width="1" height="1" fill="#008000"/>
<rect x="1503" y="406" width="1" height="1" fill="#008000"/>
<rect x="1505" y="406" width="1" height="1" fill="#008000"/>
<rect x="1507" y="406" width="1" height="1" fill="#008000"/>
<rect x="1509" y="406" width="1" height="1" fill="#008000"/>
<rect x="1511" y="406" width="1" height="1" fill="#008000"/>
<rect x="1513" y="406" width="1" height="1" fill="#008000"/>
<rect x="1515" y="406" width="1" height="1" fill="#008000"/>
<rect x="1517" y="406" width="1" height="1" fill="#008000"/>
<rect x="1519" y="406" width="1" height="1" fill="#008000"/>
<rect x="1521" y="406" width="1" height="1" fill="#008000"/>
<rect x="1523" y="406" width="1" height="1" fill="#008000"/>
<rect x="1525" y="406" width="1" height="1" fill="#008000"/>
<rect x="1527" y="406" width="1" height="1" fill="#008000"/>
<rect x="1529" y="406" width="1" height="1" fill="#008000"/>
<rect x="1531" y="406" width="1" height="1" fill="#008000"/>
<rect x="1533" y="406" width="1" height="1" fill="#008000"/>
<rect x="1535" y="406" width="1" height="1" fill="#008000"/>
<rect x="1537" y="406" width="1" height="1" fill="#008000"/>
<rect x="1539" y="406" width="1" height="1" fill="#008000"/>
<rect x="1541" y="406" width="1" height="1" fill="#008000"/>
<rect x="1543" y="406" width="1" height="1" fill="#008000"/>
<rect x="1545" y="406" width="1" height="1" fill="#008000"/>
<rect x="1547" y="406" width="1" height="1" fill="#008000"/>
<rect x="1549" y="406" width="1" height="1" fill="#008000"/>
<rect x="1551" y="406" width="1" height="1" fill="#008000"/>
<rect x="1553" y="406" width="1" height="1" fill="#008000"/>
<rect x="1555" y="406" width="1" height="1" fill="#008000"/>
<rect x="1557" y="406" width="1" height="1" fill="#008000"/>
<rect x="1559" y="406" width="1" height="1" fill="#008000"/>
<rect x="1561" y="406" width="1" height="1" fill="#008000"/>
<rect x="1563" y="406" width="1" height="1" fill="#008000"/>
<rect x="1565" y="406" width="1" height="1" fill="#008000"/>
<rect x="1567" y="406" width="1" height="1" fill="#008000"/>
<rect x="1569" y="406" width="1" height="1" fill="#008000"/>
<rect x="1571" y="406" width="1" height="1" fill="#008000"/>
<rect x="1573" y="406" width="1" height="1" fill="#008000"/>
<rect x="1575" y="406" width="1" height="1" fill="#008000"/>
<rect x="1577" y="406" width="1" height="1" fill="#008000"/>
<rect x="1579" y="406" width="1" height="1" fill="#008000"/>
<rect x="1581" y="406" width="1" height="1" fill="#008000"/>
<rect x="1583" y="406" width="1" height="1" fill="#008000"/>
<rect x="1585" y="406" width="1" height="1" fill="#008000"/>
<rect x="1587" y="406" width="1" height="1" fill="#008000"/>
<rect x="1589" y="406" width="1" height="1" fill="#008000"/>
<rect x="1591" y="406" width="1" height="1" fill="#008000"/>
<rect x="1593" y="406" width="1" height="1" fill="#008000"/>
<rect x="1595" y="406" width="1" height="1" fill="#008000"/>
<rect x="1597" y="406" width="1" height="1" fill="#008000"/>
<rect x="1599" y="406" width="1" height="1" fill="#008000"/>
<rect x="1601" y="406" width="1" height="1" fill="#008000"/>
<rect x="1603" y="406" width="1" height="1" fill="#008000"/>
<rect x="1605" y="406" width="1" height="1" fill="#008000"/>
<rect x="1607" y="406" width="1" height="1" fill="#008000"/>
<rect x="1609" y="406" width="1" height="1" fill="#008000"/>
<rect x="1611" y="406" width="1" height="1" fill="#008000"/>
<rect x="1613" y="406" width="1" height="1" fill="#008000"/>
<rect x="1615" y="406" width="1" height="1" fill="#008000"/>
<rect x="1617" y="406" width="1" height="1" fill="#008000"/>
<rect x="1619" y="406" width="1" height="1" fill="#008000"/>
<rect x="1621" y="406" width="1" height="1" fill="#008000"/>
<rect x="1623" y="406" width="1" height="1" fill="#008000"/>
<rect x="1625" y="406" width="1" height="1" fill="#008000"/>
<rect x="1627" y="406" width="1" height="1" fill="#008000"/>
<rect x="1629" y="406" width="1" height="1" fill="#008000"/>
<rect x="1631" y="406" width="1" height="1" fill="#008000"/>
<rect x="1633" y="406" width="1" height="1" fill="#008000"/>
<rect x="1635" y="406" width="1" height="1" fill="#008000"/>
<rect x="1637" y="406" width="1" height="1" fill="#008000"/>
<rect x="1639" y="406" width="1" height="1" fill="#008000"/>
<rect x="1641" y="406" width="1" height="1" fill="#008000"/>
<rect x="1643" y="406" width="1" height="1" fill="#008000"/>
<rect x="1645" y="406" width="1" height="1" fill="#008000"/>
<rect x="1647" y="406" width="1" height="1" fill="#008000"/>
<rect x="1649" y="406" width="1" height="1" fill="#008000"/>
<rect x="1651" y="406" width="1" height="1" fill="#008000"/>
<rect x="1653" y="406" width="1" height="1" fill="#008000"/>
<rect x="1655" y="406" width="1" height="1" fill="#008000"/>
<rect x="1657" y="406" width="1" height="1" fill="#008000"/>
<rect x="1659" y="406" width="1" height="1" fill="#008000"/>
<rect x="1661" y="406" width="1" height="1" fill="#008000"/>
<rect x="1663" y="406" width="1" height="1" fill="#008000"/>
<rect x="1665" y="406" width="1" height="1" fill="#008000"/>
<rect x="1667" y="406" width="1" height="1" fill="#008000"/>
<rect x="1669" y="406" width="1" height="1" fill="#008000"/>
<rect x="1671" y="406" width="1" height="1" fill="#008000"/>
<rect x="1673" y="406" width="1" height="1" fill="#008000"/>
<rect x="1675" y="406" width="1" height="1" fill="#008000"/>
<rect x="1677" y="406" width="1" height="1" fill="#008000"/>
<rect x="1679" y="406" width="1" height="1" fill="#008000"/>
<rect x="1681" y="406" width="1" height="1" fill="#008000"/>
<rect x="1683" y="406" width="1" height="1" fill="#008000"/>
<rect x="1685" y="406" width="1" height="1" fill="#008000"/>
<rect x="1687" y="406" width="1" height="1" fill="#008000"/>
<rect x="1689" y="406" width="1" height="1" fill="#008000"/>
<rect x="1691" y="406" width="1" height="1" fill="#008000"/>
<rect x="1693" y="406" width="1" height="1" fill="#008000"/>
<rect x="1695" y="406" width="1" height="1" fill="#008000"/>
<rect x="1697" y="406" width="1" height="1" fill="#008000"/>
<rect x="1699" y="406" width="1" height="1" fill="#008000"/>
<rect x="1701" y="406" width="1" height="1" fill="#008000"/>
<rect x="1703" y="406" width="1" height="1" fill="#008000"/>
<rect x="1705" y="406" width="1" height="1" fill="#008000"/>
<rect x="1707" y="406" width="1" height="1" fill="#008000"/>
<rect x="1709" y="406" width="1" height="1" fill="#008000"/>
<rect x="1711" y="406" width="1" height="1" fill="#008000"/>
<rect x="1713" y="406" width="1" height="1" fill="#008000"/>
<rect x="1715" y="406" width="1" height="1" fill="#008000"/>
<rect x="1717" y="406" width="1" height="1" fill="#008000"/>
<rect x="1719" y="406" width="1" height="1" fill="#008000"/>
<rect x="1721" y="406" width="1" height="1" fill="#008000"/>
<rect x="1731" y="406" width="1" height="1" fill="#008000"/>
<rect x="1733" y="406" width="1" height="1" fill="#008000"/>
<rect x="1735" y="406" width="1" height="1" fill="#008000"/>
<rect x="1737" y="406" width="1" height="1" fill="#008000"/>
<rect x="1739" y="406" width="1" height="1" fill="#008000"/>
<rect x="1741" y="406" width="1" height="1" fill="#008000"/>
<rect x="1743" y="406" width="1" height="1" fill="#008000"/>
<rect x="1745" y="406" width="1" height="1" fill="#008000"/>
<rect x="1747" y="406" width="1" height="1" fill="#008000"/>
<rect x="1749" y="406" width="1" height="1" fill="#008000"/>
<rect x="1751" y="406" width="1" height="1" fill="#008000"/>
<rect x="1753" y="406" width="1" height="1" fill="#008000"/>
<clipPath id="clip3"><rect x="1730" y="173" width="168" height="462"/></clipPath>
<g clip-path="url(#clip3)">
<rect x="1768" y="296" width="193" height="22" fill="#000"/>
<rect x="1769" y="297" width="191" height="20" fill="#ffffdc"/>
<text x="1771.5" y="312" font-size="15.2" fill="#000" font-family="Liberation Sans" textLength="126" lengthAdjust="spacingAndGlyphs">Get the BGM into a</text>
<rect x="1754" y="335" width="207" height="90" fill="#000"/>
<rect x="1755" y="336" width="210" height="5" fill="url(#chkh)"/>
<rect x="1755" y="419" width="210" height="5" fill="url(#chkh)"/>
<rect x="1755" y="341" width="5" height="78" fill="url(#chkv)"/>
<rect x="1760" y="341" width="201" height="78" fill="#fff"/>
<rect x="1754" y="344" width="9" height="18" fill="#000"/>
<rect x="1755" y="345" width="7" height="7" fill="#008080"/>
<rect x="1755" y="353" width="7" height="8" fill="#808000"/>
<rect x="1754" y="400" width="8" height="12" fill="#008000"/>
<rect x="1755" y="401" width="6" height="10" fill="#ffffe8"/>
<text x="1757.8" y="409.5" font-size="10" fill="#008000" font-family="Liberation Sans" text-anchor="middle">?</text>
<rect x="1816" y="344" width="145" height="34" fill="#000"/>
<rect x="1817" y="345" width="143" height="32" fill="#fff"/>
<rect x="1817" y="345" width="144" height="17" fill="#ffffd8"/>
<rect x="1816" y="362" width="145" height="1" fill="#000"/>
<path d="M1820 346h3v1h1v1h1v4h-5zM1821 347v4h3v-3h-1v-1z" fill="#000" fill-rule="evenodd"/>
<rect x="1822" y="347" width="1" height="2" fill="#000"/>
<rect x="1823" y="348" width="1" height="1" fill="#000"/>
<rect x="1820" y="355" width="1" height="1" fill="#000"/>
<rect x="1821" y="355" width="1" height="1" fill="#000"/>
<rect x="1821" y="356" width="1" height="1" fill="#000"/>
<rect x="1820" y="357" width="1" height="1" fill="#000"/>
<rect x="1820" y="358" width="1" height="1" fill="#000"/>
<rect x="1820" y="360" width="1" height="1" fill="#000"/>
<rect x="1823" y="355" width="2" height="4" fill="#000"/>
<rect x="1823" y="360" width="2" height="1" fill="#000"/>
<rect x="1829" y="352" width="1" height="3" fill="#000"/>
<rect x="1831" y="352" width="1" height="3" fill="#000"/>
<rect x="1833" y="353" width="4" height="2" fill="#000"/>
<path d="M1836 349.5l4.5 4.5-4.5 4.5z" fill="#000" shape-rendering="geometricPrecision"/>
<text x="1844.5" y="357" font-size="11" fill="#000" font-family="Liberation Sans" textLength="77" lengthAdjust="spacingAndGlyphs">DeviceInterface</text>
<text x="1824" y="373.5" font-size="11" fill="#000" font-family="Liberation Sans" textLength="84" lengthAdjust="spacingAndGlyphs">StopResultsMode</text>
<rect x="1848" y="335" width="9" height="15" fill="#000"/>
<rect x="1849" y="336" width="7" height="13" fill="#fff"/>
<path d="M1854 338v8l-4.5-4z" fill="#000"/>
<rect x="1856" y="335" width="105" height="15" fill="#000"/>
<rect x="1857" y="336" width="103" height="13" fill="#fff"/>
<text x="1859" y="346.5" font-size="11" fill="#000" font-family="Liberation Sans" textLength="24" lengthAdjust="spacingAndGlyphs">True</text>
<path d="M1891 339h6l-3 4z" fill="#000"/>
</g></g></svg><!-- /DIAGRAM -->
</body></html>
